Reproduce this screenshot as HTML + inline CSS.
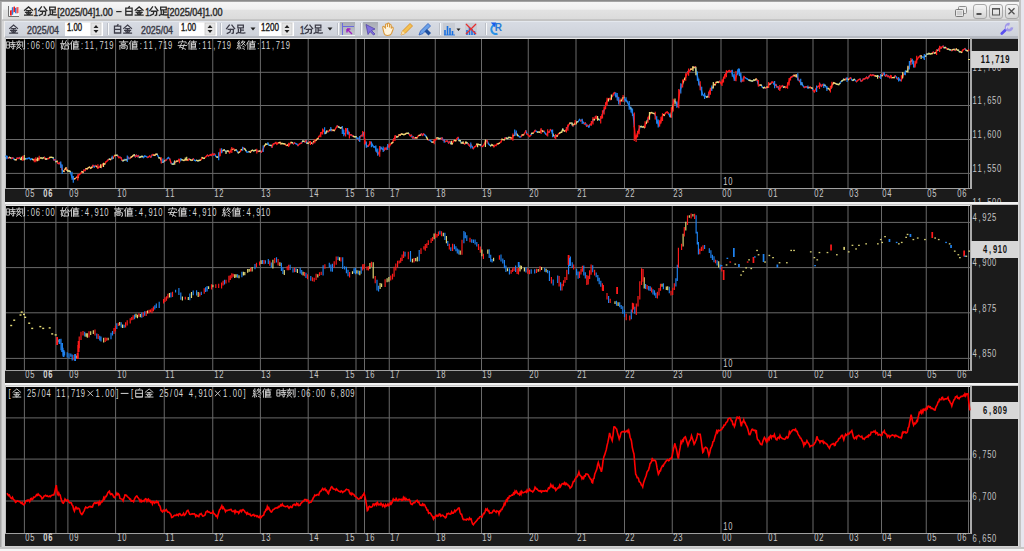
<!DOCTYPE html><html><head><meta charset="utf-8"><title>chart</title><style>html,body{margin:0;padding:0;background:#d4d4d4;overflow:hidden}svg{display:block}text{font-family:"Liberation Sans",sans-serif;font-size:10px;white-space:pre}.ui{font-family:"Liberation Sans",sans-serif}</style></head><body>
<svg width="1024" height="551" viewBox="0 0 1024 551">
<g>
<defs><linearGradient id="tb" x1="0" y1="0" x2="0" y2="1"><stop offset="0" stop-color="#f6f6f6"/><stop offset="0.4" stop-color="#f0f0f0"/><stop offset="0.46" stop-color="#e2e2e2"/><stop offset="1" stop-color="#dadada"/></linearGradient><linearGradient id="btn" x1="0" y1="0" x2="0" y2="1"><stop offset="0" stop-color="#f6f6f6"/><stop offset="0.5" stop-color="#e6e6e6"/><stop offset="1" stop-color="#d2d2d2"/></linearGradient><linearGradient id="tool" x1="0" y1="0" x2="0" y2="1"><stop offset="0" stop-color="#d8dce4"/><stop offset="1" stop-color="#ced2da"/></linearGradient><linearGradient id="press" x1="0" y1="0" x2="0" y2="1"><stop offset="0" stop-color="#a8acb4"/><stop offset="1" stop-color="#c4c8d0"/></linearGradient></defs>
<rect x="0" y="0" width="1024" height="551" fill="#d6d6d6" />
<rect x="0" y="0" width="1" height="551" fill="#a4a4a4" />
<rect x="1" y="0" width="1" height="551" fill="#bcbcbc" />
<rect x="0" y="0" width="1024" height="1" fill="#8a8a8a" />
<rect x="0" y="1" width="1024" height="1" fill="#a4a4a4" />
<rect x="1021" y="0" width="3" height="551" fill="#e6e6ee" />
<rect x="1019" y="0" width="2" height="551" fill="#c4c4c4" />
<rect x="1018" y="38" width="1" height="508" fill="#dadada" />
<rect x="0" y="549" width="1024" height="2" fill="#f6f6f6" />
<rect x="0" y="547" width="1024" height="2" fill="#c6c6c6" />
<rect x="5" y="546" width="1014" height="1" fill="#d2d2d2" />
<rect x="2" y="2" width="1017" height="18" fill="url(#tb)" />
<rect x="2" y="2" width="1" height="18" fill="#f8f8f8" />
<rect x="9" y="6" width="10" height="10" fill="#f4f6f6"/>
<path d="M8.5,6V16.5H19" stroke="#707070" stroke-width="1" fill="none"/>
<path d="M10,10.5L11.8,10V15.5H10Z" fill="#f01818"/><path d="M11.8,7.5L13.2,7V14.5L11.8,15Z" fill="#2a7ee0"/><path d="M13.4,6.8L15,6.4V12L13.4,12.4Z" fill="#f01818"/><path d="M15,8L16.5,7.6V13.2L15,13.2Z" fill="#2a7ee0"/><path d="M16.5,7.2L18.5,7V13L16.5,13.4Z" fill="#f45858"/>
<path transform="translate(23.90,6.40) scale(0.930)" d="M0.8,4.2L5,0.6L9.2,4.2M3,4.6H7M1.8,6.4H8.2M5,4.6V9.4M3,7.2L3.8,8.6M7,7.2L6.2,8.6M0.8,9.4H9.2" fill="none" stroke="#2a2a2a" stroke-width="1.40" stroke-linecap="square"/>
<text class="ui" x="33.60" y="15.8" font-size="12" fill="#2a2a2a" stroke="#2a2a2a" stroke-width="0.4" font-weight="normal" textLength="4.60" lengthAdjust="spacingAndGlyphs" style="font-family:'Liberation Sans',sans-serif">1</text>
<path transform="translate(38.10,6.40) scale(0.930)" d="M3.6,0.6L0.6,4.6M6.4,0.6L9.4,4.6M2.4,5.2H8V9.2L6.6,9.6M5,5.2L4.4,8.2L1.4,9.6" fill="none" stroke="#2a2a2a" stroke-width="1.40" stroke-linecap="square"/>
<path transform="translate(47.80,6.40) scale(0.930)" d="M2,0.8H8V3.8H2ZM5,3.8V8.6M5,6.2H8M2.6,5.2V8.8M0.6,9.6L2.6,8.6Q5,9.4 9.6,9.2" fill="none" stroke="#2a2a2a" stroke-width="1.40" stroke-linecap="square"/>
<text class="ui" x="57.30" y="15.8" font-size="12" fill="#2a2a2a" stroke="#2a2a2a" stroke-width="0.4" font-weight="normal" textLength="55.60" lengthAdjust="spacingAndGlyphs" style="font-family:'Liberation Sans',sans-serif">[2025/04]1.00</text>
<rect x="116.2" y="11" width="5.4" height="1.2" fill="#2a2a2a"/>
<path transform="translate(124.30,6.40) scale(0.930)" d="M5.4,0.2L4.4,1.6M1.6,1.8H8.4V9.4H1.6ZM1.6,5.4H8.4M1.6,9.2H8.4" fill="none" stroke="#2a2a2a" stroke-width="1.40" stroke-linecap="square"/>
<path transform="translate(134.50,6.40) scale(0.930)" d="M0.8,4.2L5,0.6L9.2,4.2M3,4.6H7M1.8,6.4H8.2M5,4.6V9.4M3,7.2L3.8,8.6M7,7.2L6.2,8.6M0.8,9.4H9.2" fill="none" stroke="#2a2a2a" stroke-width="1.40" stroke-linecap="square"/>
<text class="ui" x="145.20" y="15.8" font-size="12" fill="#2a2a2a" stroke="#2a2a2a" stroke-width="0.4" font-weight="normal" textLength="4.60" lengthAdjust="spacingAndGlyphs" style="font-family:'Liberation Sans',sans-serif">1</text>
<path transform="translate(149.20,6.40) scale(0.930)" d="M3.6,0.6L0.6,4.6M6.4,0.6L9.4,4.6M2.4,5.2H8V9.2L6.6,9.6M5,5.2L4.4,8.2L1.4,9.6" fill="none" stroke="#2a2a2a" stroke-width="1.40" stroke-linecap="square"/>
<path transform="translate(158.80,6.40) scale(0.930)" d="M2,0.8H8V3.8H2ZM5,3.8V8.6M5,6.2H8M2.6,5.2V8.8M0.6,9.6L2.6,8.6Q5,9.4 9.6,9.2" fill="none" stroke="#2a2a2a" stroke-width="1.40" stroke-linecap="square"/>
<text class="ui" x="167.00" y="15.8" font-size="12" fill="#2a2a2a" stroke="#2a2a2a" stroke-width="0.4" font-weight="normal" textLength="55.60" lengthAdjust="spacingAndGlyphs" style="font-family:'Liberation Sans',sans-serif">[2025/04]1.00</text>
<rect x="958.5" y="6.5" width="8" height="7" rx="1" fill="#ececec" stroke="#8c8c8c" stroke-width="1"/><rect x="955.5" y="9.5" width="8" height="7" rx="1" fill="#e6e6e6" stroke="#7a7a7a" stroke-width="1"/><rect x="957" y="11" width="5" height="4" fill="#cfcfcf"/>
<rect x="973.5" y="4.5" width="13" height="14" rx="2.5" fill="url(#btn)" stroke="#a8a8a8"/>
<rect x="989.5" y="4.5" width="13" height="14" rx="2.5" fill="url(#btn)" stroke="#a8a8a8"/>
<rect x="1005.5" y="4.5" width="13" height="14" rx="2.5" fill="url(#btn)" stroke="#a8a8a8"/>
<rect x="976.5" y="13" width="5" height="2" fill="#505050"/>
<rect x="992.5" y="8.5" width="7" height="6.5" fill="none" stroke="#555555" stroke-width="1"/><rect x="992" y="8" width="8" height="1.6" fill="#555555"/>
<path d="M1008.5,8.2L1014.5,14.2M1014.5,8.2L1008.5,14.2" stroke="#505050" stroke-width="1.3"/>
<rect x="2" y="19.5" width="1017" height="1" fill="#b0b0b0"/><rect x="4" y="21" width="1" height="16" fill="#eeeeee"/>
<rect x="5" y="21" width="1013" height="15" fill="url(#tool)"/>
<rect x="5" y="21" width="1013" height="1" fill="#e4e8ee"/>
<rect x="5" y="36" width="1013" height="2" fill="#b6bac2"/>
<path transform="translate(9.00,24.50) scale(0.920)" d="M0.8,4.2L5,0.6L9.2,4.2M3,4.6H7M1.8,6.4H8.2M5,4.6V9.4M3,7.2L3.8,8.6M7,7.2L6.2,8.6M0.8,9.4H9.2" fill="none" stroke="#3c3c48" stroke-width="1.36" stroke-linecap="square"/>
<text class="ui" x="27.00" y="33.5" font-size="11.5" fill="#3c3c48" stroke="#3c3c48" stroke-width="0.4" font-weight="normal" textLength="32.00" lengthAdjust="spacingAndGlyphs" style="font-family:'Liberation Sans',sans-serif">2025/04</text>
<rect x="65" y="22" width="38" height="14" fill="#ffffff"/><rect x="65" y="22" width="38" height="1" fill="#f0f0f0"/><text class="ui" x="67.00" y="31.2" font-size="11.5" fill="#202020" stroke="#202020" stroke-width="0.4" font-weight="normal" textLength="15.00" lengthAdjust="spacingAndGlyphs" style="font-family:'Liberation Sans',sans-serif">1.00</text><rect x="91" y="23" width="10" height="12" fill="#e4e4e4" stroke="#c8c8c8" stroke-width="0.8"/><path d="M93.5,28 L96,25 L98.5,28Z M93.5,30 L96,33 L98.5,30Z" fill="#202020"/>
<rect x="107" y="23" width="1" height="12" fill="#bcc0c8"/><rect x="108" y="23" width="1" height="12" fill="#f8f9fa"/>
<path transform="translate(113.00,24.50) scale(0.920)" d="M5.4,0.2L4.4,1.6M1.6,1.8H8.4V9.4H1.6ZM1.6,5.4H8.4M1.6,9.2H8.4" fill="none" stroke="#3c3c48" stroke-width="1.36" stroke-linecap="square"/>
<path transform="translate(123.00,24.50) scale(0.920)" d="M0.8,4.2L5,0.6L9.2,4.2M3,4.6H7M1.8,6.4H8.2M5,4.6V9.4M3,7.2L3.8,8.6M7,7.2L6.2,8.6M0.8,9.4H9.2" fill="none" stroke="#3c3c48" stroke-width="1.36" stroke-linecap="square"/>
<text class="ui" x="141.00" y="33.5" font-size="11.5" fill="#3c3c48" stroke="#3c3c48" stroke-width="0.4" font-weight="normal" textLength="32.00" lengthAdjust="spacingAndGlyphs" style="font-family:'Liberation Sans',sans-serif">2025/04</text>
<rect x="179" y="22" width="38" height="14" fill="#ffffff"/><rect x="179" y="22" width="38" height="1" fill="#f0f0f0"/><text class="ui" x="181.00" y="31.2" font-size="11.5" fill="#202020" stroke="#202020" stroke-width="0.4" font-weight="normal" textLength="15.00" lengthAdjust="spacingAndGlyphs" style="font-family:'Liberation Sans',sans-serif">1.00</text><rect x="205" y="23" width="10" height="12" fill="#e4e4e4" stroke="#c8c8c8" stroke-width="0.8"/><path d="M207.5,28 L210,25 L212.5,28Z M207.5,30 L210,33 L212.5,30Z" fill="#202020"/>
<rect x="220" y="23" width="1" height="12" fill="#bcc0c8"/><rect x="221" y="23" width="1" height="12" fill="#f8f9fa"/>
<path transform="translate(226.00,24.50) scale(0.920)" d="M3.6,0.6L0.6,4.6M6.4,0.6L9.4,4.6M2.4,5.2H8V9.2L6.6,9.6M5,5.2L4.4,8.2L1.4,9.6" fill="none" stroke="#3c3c48" stroke-width="1.36" stroke-linecap="square"/>
<path transform="translate(236.00,24.50) scale(0.920)" d="M2,0.8H8V3.8H2ZM5,3.8V8.6M5,6.2H8M2.6,5.2V8.8M0.6,9.6L2.6,8.6Q5,9.4 9.6,9.2" fill="none" stroke="#3c3c48" stroke-width="1.36" stroke-linecap="square"/>
<path d="M250.5,27.5H255.5L253,30.5Z" fill="#202020"/>
<rect x="259" y="22" width="35" height="14" fill="#ffffff"/><rect x="259" y="22" width="35" height="1" fill="#f0f0f0"/><text class="ui" x="261.00" y="31.2" font-size="11.5" fill="#202020" stroke="#202020" stroke-width="0.4" font-weight="normal" textLength="18.00" lengthAdjust="spacingAndGlyphs" style="font-family:'Liberation Sans',sans-serif">1200</text><rect x="282" y="23" width="10" height="12" fill="#e4e4e4" stroke="#c8c8c8" stroke-width="0.8"/><path d="M284.5,28 L287,25 L289.5,28Z M284.5,30 L287,33 L289.5,30Z" fill="#202020"/>
<text class="ui" x="300.00" y="33.5" font-size="11.5" fill="#3c3c48" stroke="#3c3c48" stroke-width="0.4" font-weight="normal" textLength="4.50" lengthAdjust="spacingAndGlyphs" style="font-family:'Liberation Sans',sans-serif">1</text>
<path transform="translate(304.00,24.50) scale(0.920)" d="M3.6,0.6L0.6,4.6M6.4,0.6L9.4,4.6M2.4,5.2H8V9.2L6.6,9.6M5,5.2L4.4,8.2L1.4,9.6" fill="none" stroke="#3c3c48" stroke-width="1.36" stroke-linecap="square"/>
<path transform="translate(313.50,24.50) scale(0.920)" d="M2,0.8H8V3.8H2ZM5,3.8V8.6M5,6.2H8M2.6,5.2V8.8M0.6,9.6L2.6,8.6Q5,9.4 9.6,9.2" fill="none" stroke="#3c3c48" stroke-width="1.36" stroke-linecap="square"/>
<path d="M327.5,27.5H332.5L330,30.5Z" fill="#202020"/>
<rect x="337" y="23" width="1" height="12" fill="#bcc0c8"/><rect x="338" y="23" width="1" height="12" fill="#f8f9fa"/>
<rect x="340" y="22" width="15" height="14" fill="url(#press)"/><rect x="340" y="35" width="15" height="1" fill="#f0f2f4"/>
<path d="M342.5,23V35M342,26.5H354" stroke="#6a6adc" stroke-width="1"/><path d="M347,29L352,34M347,29V32.5M347,29H350.5" stroke="#a020c0" stroke-width="1.4" fill="none"/>
<rect x="360" y="23" width="1" height="12" fill="#bcc0c8"/><rect x="361" y="23" width="1" height="12" fill="#f8f9fa"/>
<rect x="363" y="22" width="15" height="14" fill="url(#press)"/>
<path d="M366,24.5L375,29L371.5,30.5L375,34L373.5,35L370,31.5L368,34.5Z" fill="#8070e0" stroke="#4a3aa0" stroke-width="0.7"/>
<path d="M383,29Q382,26 384,26.5L385.5,28V24.5Q386.5,23 387.5,24.5V27V23.5Q388.7,22.5 389.5,24V27.5V24.5Q390.8,23.8 391.2,25.5V28.5L392,27Q393.8,27 393,29.5L391.5,33.5Q390.5,35.5 387.5,35.5Q384.5,35.5 384,33Z" fill="#fff4dc" stroke="#d89a40" stroke-width="1.1"/>
<path d="M401,35L402.5,31L410,23.5L412.5,26L405,33.5Z" fill="#f4c050" stroke="#d8902a" stroke-width="0.9"/><path d="M401,35L402.5,31L405,33.5Z" fill="#f8e0b0"/>
<path d="M419,35L420.5,31L428,23.5L430.5,26L423,33.5Z" fill="#6aa0e8" stroke="#3a68c0" stroke-width="0.9"/><path d="M424.5,31.5L428.5,35.5L431,33L427,29Z" fill="#2050a0"/>
<rect x="439" y="23" width="1" height="12" fill="#bcc0c8"/><rect x="440" y="23" width="1" height="12" fill="#f8f9fa"/>
<rect x="443" y="23" width="12" height="12" fill="#c8ccd4"/>
<path d="M445,35V30M447.5,35V26M450,35V28M452.5,35V31" stroke="#1a70e0" stroke-width="1.6"/><path d="M444,35H455" stroke="#1a70e0" stroke-width="0.8"/>
<path d="M456.5,28.5H460.5L458.5,31Z" fill="#202020"/>
<rect x="465" y="23" width="12" height="12" fill="#c8ccd4"/>
<path d="M467,35V30M469.5,35V27M472,35V29M474.5,35V31" stroke="#1a70e0" stroke-width="1.6"/><path d="M466,24L476,34M476,24L466,34" stroke="#e83030" stroke-width="1.3"/>
<rect x="485" y="23" width="1" height="12" fill="#bcc0c8"/><rect x="486" y="23" width="1" height="12" fill="#f8f9fa"/>
<path d="M494.5,25 A4.6,4.6 0 1 0 497.5,33.8" fill="none" stroke="#2a92e6" stroke-width="2.1"/>
<path d="M490.8,22.6H496.2L495.2,27.6Z" fill="#1a5af0"/>
<text x="494.8" y="31.4" font-size="6.8" font-weight="bold" fill="#2a7ad8" style="font-family:'Liberation Sans',sans-serif">R</text>
<path d="M1001.8,33.6L1006,29.4" stroke="#5a50f0" stroke-width="2.8" stroke-linecap="round"/>
<path d="M1009.6,24.2 A3,3 0 1 0 1012,27.4" fill="none" stroke="#a098e8" stroke-width="2.6"/>
<path d="M1006.4,28.6L1007.2,25.6" stroke="#f0eeff" stroke-width="1"/>
<rect x="5" y="38" width="1013" height="508" fill="#1b1b1b"/>
<rect x="5" y="202" width="1013" height="2" fill="#f2f2f2"/><rect x="5" y="204" width="1013" height="1" fill="#c8c8c8"/>
<rect x="5" y="383" width="1013" height="2" fill="#f2f2f2"/><rect x="5" y="385" width="1013" height="1" fill="#c8c8c8"/>
<rect x="971" y="38" width="47" height="1" fill="#a8acb4"/>
<rect x="6" y="39" width="964" height="149" fill="#000"/>
<rect x="5" y="38" width="966" height="1" fill="#e8e8e8"/>
<rect x="5" y="38" width="1" height="150" fill="#c0c0c0"/>
<rect x="970" y="38" width="2" height="151" fill="#ababab"/>
<rect x="5" y="188" width="966" height="1" fill="#a0a0a0"/>
<rect x="6" y="206" width="964" height="164" fill="#000"/>
<rect x="5" y="205" width="966" height="1" fill="#e8e8e8"/>
<rect x="5" y="205" width="1" height="165" fill="#c0c0c0"/>
<rect x="970" y="205" width="2" height="166" fill="#ababab"/>
<rect x="5" y="370" width="966" height="1" fill="#a0a0a0"/>
<rect x="6" y="387" width="964" height="146" fill="#000"/>
<rect x="5" y="386" width="966" height="1" fill="#e8e8e8"/>
<rect x="5" y="386" width="1" height="147" fill="#c0c0c0"/>
<rect x="970" y="386" width="2" height="148" fill="#ababab"/>
<rect x="5" y="533" width="966" height="1" fill="#a0a0a0"/>
<path d="M24.4,39V188M55.9,39V188M67.9,39V188M115.6,39V188M164.25,39V188M212.75,39V188M260.4,39V188M308.2,39V188M356,39V188M364.5,39V188M389.25,39V188M435.25,39V188M481.5,39V188M528.25,39V188M576,39V188M624.5,39V188M672.25,39V188M721,39V188M767,39V188M813,39V188M848,39V188M881.5,39V188M926.25,39V188M968.5,39V188" stroke="#6a6a6a" stroke-width="1"/>
<path d="M6,72.3H970M6,105.5H970M6,139.5H970M6,173.4H970" stroke="#6a6a6a" stroke-width="1"/>
<path d="M24.4,206V370M55.9,206V370M67.9,206V370M115.6,206V370M164.25,206V370M212.75,206V370M260.4,206V370M308.2,206V370M356,206V370M364.5,206V370M389.25,206V370M435.25,206V370M481.5,206V370M528.25,206V370M576,206V370M624.5,206V370M672.25,206V370M721,206V370M767,206V370M813,206V370M848,206V370M881.5,206V370M926.25,206V370M968.5,206V370" stroke="#6a6a6a" stroke-width="1"/>
<path d="M6,222.4H970M6,267.6H970M6,312.8H970M6,358.4H970" stroke="#6a6a6a" stroke-width="1"/>
<path d="M24.4,387V533M55.9,387V533M67.9,387V533M115.6,387V533M164.25,387V533M212.75,387V533M260.4,387V533M308.2,387V533M356,387V533M364.5,387V533M389.25,387V533M435.25,387V533M481.5,387V533M528.25,387V533M576,387V533M624.5,387V533M672.25,387V533M721,387V533M767,387V533M813,387V533M848,387V533M881.5,387V533M926.25,387V533M968.5,387V533" stroke="#6a6a6a" stroke-width="1"/>
<path d="M6,417.9H970M6,459.1H970M6,501.0H970" stroke="#6a6a6a" stroke-width="1"/>
<path d="M6.0,156.3L7.1,156.9M7.1,156.9L8.2,158.1M10.5,157.9L11.6,158.4M12.8,157.9L13.9,159.0M13.9,159.0L15.0,159.6M17.2,158.1L18.3,158.4M19.4,157.8L20.6,159.2M22.8,157.2L23.9,159.1M25.0,158.9L26.1,158.6M26.1,158.6L27.2,158.8M27.2,158.8L28.3,158.1M28.3,158.1L29.4,158.1M29.4,158.1L30.6,159.6M30.6,159.6L31.7,158.9M31.7,158.9L32.8,159.5M43.3,157.8L44.4,157.4M46.5,159.0L47.6,158.6M53.0,157.7L54.0,159.9M55.0,159.9L56.0,161.6M58.0,163.3L59.0,163.7M60.0,162.6L61.0,165.5M62.0,169.5L63.0,170.9M68.0,171.2L69.0,171.0M70.0,171.5L71.0,173.9M71.0,173.9L72.0,177.1M72.0,177.1L73.0,178.4M84.0,170.1L85.0,170.5M93.0,165.5L94.2,167.0M94.2,167.0L95.3,165.7M97.7,167.6L98.8,167.4M100.0,166.4L101.2,167.4M108.2,159.8L109.4,159.2M117.0,155.2L118.0,156.3M120.0,157.2L121.0,157.9M122.0,160.2L123.0,160.8M124.0,160.2L125.0,159.4M125.0,159.4L126.0,159.9M128.0,157.3L129.0,158.7M129.0,158.7L130.1,158.2M134.3,155.0L135.3,156.7M136.3,155.3L137.4,156.6M138.4,155.8L139.4,157.3M140.4,157.0L141.5,156.5M142.5,156.5L143.5,157.6M143.5,157.6L144.6,156.0M144.6,156.0L145.6,156.3M145.6,156.3L146.7,156.9M146.7,156.9L147.7,157.4M150.8,157.1L151.9,155.3M157.0,154.3L158.0,156.0M158.0,156.0L159.0,157.8M161.1,159.9L162.1,162.4M164.3,160.9L165.3,160.5M166.4,159.8L167.5,158.3M167.5,158.3L168.6,157.6M168.6,157.6L169.8,159.2M171.1,162.9L172.3,164.1M173.4,164.1L174.5,161.4M174.5,161.4L175.6,162.1M178.8,159.6L179.8,161.0M179.8,161.0L180.9,158.9M180.9,158.9L181.9,159.8M189.1,159.0L190.2,159.7M193.3,159.1L194.4,160.2M194.4,160.2L195.6,160.7M195.6,160.7L196.7,160.4M197.9,160.8L199.0,160.5M207.4,155.3L208.5,155.8M210.5,154.8L211.5,155.4M212.6,153.6L213.6,154.9M214.7,154.2L215.8,156.3M215.8,156.3L216.9,157.0M220.9,150.9L222.0,151.7M224.2,150.0L225.2,150.9M225.2,150.9L226.3,151.9M226.3,151.9L227.4,151.0M236.0,149.9L237.1,151.1M237.1,151.1L238.3,152.7M243.4,148.1L244.6,148.7M245.8,150.4L247.0,152.1M247.0,152.1L248.1,152.1M248.1,152.1L249.2,151.7M252.6,150.3L253.8,150.8M256.0,150.2L257.0,150.8M257.0,150.8L258.0,151.4M260.0,151.0L261.0,152.2M266.9,144.3L267.9,143.1M267.9,143.1L268.9,145.1M268.9,145.1L270.0,145.4M271.0,145.4L272.0,147.0M273.9,143.7L274.9,143.4M292.3,142.7L293.4,143.7M294.6,143.0L295.7,143.6M295.7,143.6L296.9,144.2M296.9,144.2L298.0,145.4M301.5,142.9L302.7,141.2M303.9,141.2L305.0,142.0M306.0,140.8L307.1,143.2M309.3,142.0L310.4,142.7M311.5,143.1L312.6,143.7M323.5,130.5L324.6,131.6M324.6,131.6L325.7,133.2M326.8,131.1L327.9,131.7M331.0,129.6L332.0,130.6M337.3,126.0L338.4,126.9M339.5,127.4L340.5,128.0M342.6,129.0L343.5,133.1M343.5,133.1L344.5,133.8M344.5,133.8L345.6,133.0M347.9,131.4L349.1,134.3M349.1,134.3L350.3,134.8M351.4,135.0L352.6,135.9M356.0,136.7L357.0,138.2M357.0,138.2L358.0,138.2M358.0,138.2L359.0,140.2M361.2,135.7L362.3,134.9M362.3,134.9L363.4,132.9M363.4,132.9L364.5,138.6M365.6,143.1L367.0,146.5M367.0,146.5L368.2,146.0M370.7,142.4L371.8,143.6M371.8,143.6L372.9,145.8M372.9,145.8L373.9,147.0M373.9,147.0L375.0,146.6M375.0,146.6L376.2,150.1M376.2,150.1L377.4,152.6M379.7,151.0L380.8,147.2M380.8,147.2L381.9,148.7M381.9,148.7L382.9,149.3M382.9,149.3L384.0,150.2M386.2,149.2L387.3,147.3M388.4,146.2L389.5,146.0M393.7,139.2L394.6,138.3M395.6,136.1L396.8,137.0M408.3,133.2L409.4,134.4M411.4,135.3L412.5,137.8M413.5,137.1L414.5,138.5M421.4,133.9L422.5,135.3M423.5,134.0L424.6,134.8M424.6,134.8L425.6,135.7M425.6,135.7L426.5,137.1M428.7,139.8L429.8,140.4M429.8,140.4L431.0,141.2M431.0,141.2L432.1,142.1M438.0,137.9L439.0,138.8M440.0,138.4L441.0,139.1M442.0,137.9L443.1,139.8M444.2,140.6L445.3,141.6M447.6,141.3L448.7,142.9M449.9,141.6L451.0,143.6M458.0,137.6L459.1,140.5M460.2,140.8L461.3,142.9M463.6,143.3L464.7,143.9M467.0,142.8L468.2,143.9M469.2,145.3L470.2,146.3M471.3,145.3L472.3,147.0M472.3,147.0L473.3,148.5M480.4,144.8L481.5,146.2M486.3,140.7L487.4,141.6M487.4,141.6L488.5,143.8M488.5,143.8L489.6,145.0M489.6,145.0L490.7,145.7M505.3,137.9L506.5,138.2M507.6,138.5L508.8,137.5M517.8,135.5L518.9,136.3M518.9,136.3L520.0,137.1M520.0,137.1L521.2,136.4M525.8,131.0L527.0,133.9M530.6,135.4L531.7,133.4M535.2,130.5L536.4,131.4M536.4,131.4L537.7,132.1M540.8,130.3L541.8,130.5M543.8,131.2L544.8,132.6M544.8,132.6L545.8,134.0M545.8,134.0L546.8,134.7M548.0,132.1L549.3,132.0M550.5,129.7L551.6,130.9M551.6,130.9L552.6,133.7M553.7,135.5L554.8,137.4M562.8,129.1L563.8,130.6M566.8,128.8L567.9,126.2M571.0,123.1L572.0,124.0M572.0,124.0L573.0,125.9M577.1,121.7L578.3,121.5M578.3,121.5L579.5,119.5M579.5,119.5L580.7,120.8M581.9,120.2L583.1,122.3M583.1,122.3L584.3,123.7M585.4,123.1L586.6,126.1M587.7,125.4L588.9,127.1M588.9,127.1L590.0,124.8M592.2,122.3L593.3,119.4M595.5,116.8L596.6,118.0M598.7,119.4L599.8,120.1M599.8,120.1L601.0,118.0M602.2,114.9L603.4,111.4M603.4,111.4L604.5,109.5M608.8,98.8L609.7,98.6M611.7,96.7L612.6,95.8M614.6,92.7L615.5,95.5M615.5,95.5L616.5,96.2M618.4,100.5L619.4,101.6M623.8,97.5L624.9,99.6M624.9,99.6L626.0,100.4M626.0,100.4L627.0,101.2M627.0,101.2L628.1,103.6M628.1,103.6L629.2,105.7M629.2,105.7L630.3,107.8M631.3,109.2L632.2,112.7M632.2,112.7L633.2,114.7M633.2,114.7L634.3,126.5M639.1,129.9L640.0,126.8M641.1,126.4L642.2,127.1M647.3,120.7L648.4,118.2M654.5,113.6L655.6,116.3M655.6,116.3L656.7,120.1M656.7,120.1L657.8,122.7M657.8,122.7L658.9,125.7M668.3,113.3L669.4,115.0M669.4,115.0L670.5,116.6M674.1,100.9L675.3,101.6M675.3,101.6L676.5,103.3M676.5,103.3L677.7,106.3M679.9,90.9L681.1,87.4M687.5,72.3L688.6,71.0M695.2,66.9L696.2,71.9M696.2,71.9L697.1,74.8M697.1,74.8L698.1,79.3M698.1,79.3L699.2,83.7M699.2,83.7L700.2,85.9M700.2,85.9L701.3,90.0M701.3,90.0L702.4,94.0M702.4,94.0L703.5,95.5M703.5,95.5L704.6,95.5M704.6,95.5L705.7,96.5M705.7,96.5L706.8,97.0M707.9,96.6L709.0,92.6M718.4,82.3L719.4,81.5M725.9,73.8L727.1,72.3M731.4,71.2L732.6,74.6M732.6,74.6L733.9,77.3M733.9,77.3L735.1,79.9M736.3,75.7L737.5,73.4M737.5,73.4L738.7,69.2M738.7,69.2L739.7,72.8M739.7,72.8L740.6,76.6M740.6,76.6L741.6,81.5M742.6,80.4L743.5,78.0M744.5,77.3L745.7,78.0M745.7,78.0L746.8,78.7M746.8,78.7L748.0,79.5M748.0,79.5L749.1,80.2M750.3,80.5L751.5,80.9M752.6,81.0L753.8,80.0M757.1,80.2L758.0,83.4M758.0,83.4L759.0,85.6M761.2,85.2L762.3,87.0M762.3,87.0L763.4,87.8M764.5,87.5L765.7,88.1M769.9,84.1L770.9,83.4M772.8,82.3L773.8,84.0M773.8,84.0L774.8,85.4M775.8,84.6L776.9,86.9M777.9,86.8L778.9,89.1M782.5,85.8L783.6,87.2M792.0,76.7L793.0,76.2M796.0,75.1L797.0,76.3M798.5,79.6L799.7,81.4M802.0,84.3L803.1,85.8M803.1,85.8L804.3,87.4M805.5,86.9L806.6,86.8M812.2,88.2L813.3,90.4M820.2,84.5L821.4,86.3M822.5,84.6L823.7,85.4M824.8,85.3L826.0,86.7M826.0,86.7L827.2,88.5M836.7,84.1L837.7,84.4M839.8,83.6L840.8,81.9M840.8,81.9L841.8,81.0M842.8,80.4L843.9,79.3M846.1,78.6L847.2,79.0M850.7,78.0L851.9,79.8M851.9,79.8L853.0,80.3M854.2,79.4L855.3,80.3M855.3,80.3L856.5,81.6M860.0,79.2L861.1,81.0M863.3,79.1L864.4,78.9M866.5,77.3L867.5,78.4M868.6,77.2L869.6,75.7M872.9,74.9L874.0,75.5M877.5,75.8L878.6,76.4M878.6,76.4L879.8,77.3M883.4,73.4L884.4,74.4M884.4,74.4L885.4,75.9M886.5,75.0L887.5,76.4M888.5,76.2L889.6,77.6M895.2,75.9L896.3,77.1M896.3,77.1L897.4,78.8M898.5,78.2L899.6,79.8M899.6,79.8L900.7,80.5M900.7,80.5L902.0,78.4M903.4,74.3L904.7,73.8M904.7,73.8L905.9,71.5M907.2,71.4L908.3,67.9M909.4,66.3L910.5,61.7M913.0,62.6L914.3,66.6M920.3,55.8L921.4,56.4M921.4,56.4L922.4,57.0M922.4,57.0L923.5,57.7M923.5,57.7L924.6,56.2M925.7,56.1L926.8,54.1M927.9,54.1L928.9,53.5M933.3,52.2L934.4,53.1M937.7,50.3L938.8,49.0M939.9,47.1L940.9,48.3M943.1,46.2L944.2,47.7M945.3,47.5L946.4,48.3M948.5,49.1L949.6,49.7M950.7,49.9L951.8,50.5M954.0,49.4L955.1,50.3M958.4,50.3L959.4,51.7M964.9,48.7L966.2,50.4" stroke="#1e82f0" stroke-width="1.4" fill="none" stroke-linecap="square"/>
<path d="M8.2,158.1L9.4,157.4M11.6,158.4L12.8,157.9M16.1,159.8L17.2,158.1M18.3,158.4L19.4,157.8M21.7,158.8L22.8,157.2M36.0,160.1L37.0,159.5M38.0,159.8L39.0,158.5M44.4,157.4L45.5,159.0M47.6,158.6L48.7,158.4M48.7,158.4L49.8,157.5M54.0,159.9L55.0,159.9M57.0,161.3L58.0,163.3M59.0,163.7L60.0,162.6M61.0,165.5L62.0,169.5M64.0,171.3L65.0,169.3M66.0,167.9L67.0,170.0M73.0,178.4L74.0,178.9M75.0,178.6L76.0,177.8M76.0,177.8L77.0,177.2M78.0,177.4L79.0,174.6M79.0,174.6L80.0,174.0M80.0,174.0L81.0,173.0M81.0,173.0L82.0,171.7M83.0,172.2L84.0,170.1M85.0,170.5L86.1,168.7M87.3,168.8L88.4,167.7M89.6,167.2L90.7,168.2M91.9,167.2L93.0,165.5M95.3,165.7L96.5,166.4M98.8,167.4L100.0,166.4M101.2,167.4L102.3,164.7M102.3,164.7L103.5,163.9M104.7,164.0L105.8,162.1M105.8,162.1L107.0,161.1M107.0,161.1L108.2,159.8M110.6,159.5L111.8,158.1M113.0,158.1L114.0,156.4M114.0,156.4L115.0,155.4M118.0,156.3L119.0,157.8M119.0,157.8L120.0,157.2M121.0,157.9L122.0,160.2M127.0,159.7L128.0,157.3M130.1,158.2L131.1,157.2M132.2,156.5L133.2,155.5M135.3,156.7L136.3,155.3M137.4,156.6L138.4,155.8M147.7,157.4L148.8,156.8M148.8,156.8L149.8,155.9M149.8,155.9L150.8,157.1M151.9,155.3L152.9,154.7M152.9,154.7L153.9,155.1M154.9,155.3L156.0,154.2M165.3,160.5L166.4,159.8M169.8,159.2L171.1,162.9M175.6,162.1L176.6,161.2M177.7,161.1L178.8,159.6M185.0,159.9L186.0,159.7M187.0,159.9L188.1,160.2M188.1,160.2L189.1,159.0M192.3,160.1L193.3,159.1M200.1,160.3L201.1,159.6M201.1,159.6L202.2,157.7M204.3,158.2L205.3,157.3M205.3,157.3L206.4,156.2M206.4,156.2L207.4,155.3M208.5,155.8L209.5,155.3M209.5,155.3L210.5,154.8M211.5,155.4L212.6,153.6M213.6,154.9L214.7,154.2M218.0,157.3L219.0,155.9M219.0,155.9L219.9,153.0M219.9,153.0L220.9,150.9M222.0,151.7L223.1,150.4M228.5,151.1L229.6,152.9M229.6,152.9L230.6,151.2M230.6,151.2L231.5,149.5M232.5,149.4L233.7,148.8M233.7,148.8L234.8,150.3M239.3,152.2L240.3,151.4M240.3,151.4L241.4,149.6M242.4,149.4L243.4,148.1M250.4,152.2L251.5,150.6M258.0,151.4L259.0,151.2M261.0,152.2L262.2,151.0M262.2,151.0L263.4,148.2M263.4,148.2L264.5,145.8M272.0,147.0L273.0,144.4M273.0,144.4L273.9,143.7M274.9,143.4L275.9,142.5M275.9,142.5L276.9,144.2M276.9,144.2L278.0,142.9M278.0,142.9L279.0,142.7M280.0,142.5L281.0,143.8M285.0,144.2L286.0,145.2M286.0,145.2L287.0,145.4M288.0,145.0L289.1,144.9M289.1,144.9L290.1,143.5M290.1,143.5L291.2,142.4M293.4,143.7L294.6,143.0M298.0,145.4L299.2,144.2M299.2,144.2L300.4,143.5M300.4,143.5L301.5,142.9M305.0,142.0L306.0,140.8M308.2,143.3L309.3,142.0M312.6,143.7L313.7,141.5M315.9,140.4L317.0,139.2M318.0,138.5L318.9,136.5M318.9,136.5L319.9,135.9M319.9,135.9L321.1,133.0M321.1,133.0L322.3,132.2M322.3,132.2L323.5,130.5M327.9,131.7L328.9,131.0M328.9,131.0L330.0,130.1M332.0,130.6L333.0,130.1M334.1,130.5L335.1,129.5M335.1,129.5L336.2,127.5M336.2,127.5L337.3,126.0M341.6,127.6L342.6,129.0M345.6,133.0L346.7,129.1M346.7,129.1L347.9,131.4M350.3,134.8L351.4,135.0M352.6,135.9L353.7,136.5M359.0,140.2L360.1,136.8M360.1,136.8L361.2,135.7M364.5,138.6L365.6,143.1M368.2,146.0L369.5,144.1M369.5,144.1L370.7,142.4M377.4,152.6L378.6,153.8M378.6,153.8L379.7,151.0M384.0,150.2L385.1,148.1M385.1,148.1L386.2,149.2M387.3,147.3L388.4,146.2M389.5,146.0L390.5,144.4M390.5,144.4L391.6,143.2M392.7,142.5L393.7,139.2M394.6,138.3L395.6,136.1M397.9,136.6L399.1,134.9M400.2,135.0L401.4,134.0M405.0,134.3L406.1,133.5M409.4,134.4L410.4,136.1M410.4,136.1L411.4,135.3M412.5,137.8L413.5,137.1M414.5,138.5L415.7,137.7M416.8,137.9L418.0,136.2M418.0,136.2L419.1,135.4M420.3,135.1L421.4,133.9M422.5,135.3L423.5,134.0M427.5,139.3L428.7,139.8M433.3,142.1L434.5,140.4M434.5,140.4L435.8,139.7M435.8,139.7L437.0,138.0M441.0,139.1L442.0,137.9M443.1,139.8L444.2,140.6M445.3,141.6L446.4,141.0M446.4,141.0L447.6,141.3M448.7,142.9L449.9,141.6M452.2,143.7L453.4,141.1M453.4,141.1L454.5,140.5M455.7,140.7L456.8,138.8M456.8,138.8L458.0,137.6M462.4,142.7L463.6,143.3M464.7,143.9L465.9,142.4M468.2,143.9L469.2,145.3M470.2,146.3L471.3,145.3M473.3,148.5L474.5,146.9M474.5,146.9L475.7,146.4M475.7,146.4L476.9,144.3M481.5,146.2L482.7,146.4M482.7,146.4L483.9,144.9M483.9,144.9L485.1,142.3M485.1,142.3L486.3,140.7M492.9,145.4L493.9,146.9M493.9,146.9L495.0,145.3M495.0,145.3L496.0,145.4M496.0,145.4L497.0,144.0M497.0,144.0L498.0,143.8M499.1,143.3L500.1,142.6M500.1,142.6L501.1,141.8M501.1,141.8L502.0,139.3M504.2,139.7L505.3,137.9M510.9,137.8L512.0,139.0M512.0,139.0L513.2,135.7M514.4,135.3L515.6,132.9M515.6,132.9L516.7,133.9M521.2,136.4L522.3,135.0M523.5,134.9L524.6,133.3M524.6,133.3L525.8,131.0M527.0,133.9L528.2,135.0M528.2,135.0L529.4,136.5M529.4,136.5L530.6,135.4M532.9,133.3L534.0,132.1M534.0,132.1L535.2,130.5M539.9,132.2L540.8,130.3M542.8,131.5L543.8,131.2M546.8,134.7L548.0,132.1M549.3,132.0L550.5,129.7M554.8,137.4L556.0,135.9M557.2,136.0L558.4,134.0M558.4,134.0L559.5,133.2M564.7,131.1L565.7,130.3M565.7,130.3L566.8,128.8M567.9,126.2L568.9,124.7M568.9,124.7L570.0,123.2M573.0,125.9L574.0,124.4M580.7,120.8L581.9,120.2M584.3,123.7L585.4,123.1M586.6,126.1L587.7,125.4M590.0,124.8L591.1,123.8M591.1,123.8L592.2,122.3M594.4,119.7L595.5,116.8M596.6,118.0L597.6,119.0M601.0,118.0L602.2,114.9M604.5,109.5L605.6,105.7M605.6,105.7L606.7,102.1M606.7,102.1L607.8,99.7M607.8,99.7L608.8,98.8M609.7,98.6L610.7,99.5M610.7,99.5L611.7,96.7M612.6,95.8L613.6,93.5M613.6,93.5L614.6,92.7M616.5,96.2L617.5,96.5M617.5,96.5L618.4,100.5M619.4,101.6L620.5,100.7M634.3,126.5L635.4,138.5M635.4,138.5L636.4,137.1M636.4,137.1L637.3,133.8M637.3,133.8L638.3,132.1M638.3,132.1L639.1,129.9M644.4,127.5L645.4,124.6M645.4,124.6L646.3,123.2M648.4,118.2L649.5,115.1M649.5,115.1L650.5,112.9M658.9,125.7L660.0,123.2M660.0,123.2L661.0,121.0M661.0,121.0L662.1,117.2M662.1,117.2L663.2,114.7M664.2,115.2L665.1,113.8M665.1,113.8L666.1,112.5M666.1,112.5L667.2,112.0M667.2,112.0L668.3,113.3M672.9,105.3L674.1,100.9M677.7,106.3L678.8,98.4M678.8,98.4L679.9,90.9M681.1,87.4L682.3,84.8M683.5,81.3L684.5,79.2M685.4,77.6L686.4,75.4M686.4,75.4L687.5,72.3M688.6,71.0L689.7,71.0M689.7,71.0L690.8,69.2M691.9,69.1L693.0,67.5M694.1,67.6L695.2,66.9M709.0,92.6L710.0,90.5M710.0,90.5L711.1,89.3M712.1,87.7L713.0,86.7M713.0,86.7L714.0,84.4M715.1,84.7L716.2,82.4M719.4,81.5L720.3,82.5M720.3,82.5L721.3,83.9M721.3,83.9L722.5,81.5M722.5,81.5L723.6,78.3M723.6,78.3L724.8,75.7M724.8,75.7L725.9,73.8M727.1,72.3L728.2,71.3M728.2,71.3L729.2,70.6M729.2,70.6L730.3,71.7M730.3,71.7L731.4,71.2M735.1,79.9L736.3,75.7M741.6,81.5L742.6,80.4M743.5,78.0L744.5,77.3M756.1,79.1L757.1,80.2M759.0,85.6L760.1,85.0M765.7,88.1L766.9,87.1M768.0,87.1L769.0,84.2M770.9,83.4L771.9,82.1M771.9,82.1L772.8,82.3M774.8,85.4L775.8,84.6M776.9,86.9L777.9,86.8M778.9,89.1L780.1,88.2M780.1,88.2L781.3,86.6M781.3,86.6L782.5,85.8M784.7,86.8L785.8,87.6M785.8,87.6L786.9,87.0M786.9,87.0L787.9,83.9M787.9,83.9L788.8,82.4M788.8,82.4L789.8,78.9M789.8,78.9L790.9,77.6M790.9,77.6L792.0,76.7M793.0,76.2L794.1,75.3M795.1,76.0L796.0,75.1M797.0,76.3L798.5,79.6M799.7,81.4L800.8,82.8M804.3,87.4L805.5,86.9M806.6,86.8L807.8,87.3M808.9,87.7L810.1,87.0M810.1,87.0L811.2,87.9M813.3,90.4L814.4,91.9M814.4,91.9L815.6,89.4M815.6,89.4L816.7,87.7M816.7,87.7L817.9,86.7M817.9,86.7L819.0,86.0M819.0,86.0L820.2,84.5M821.4,86.3L822.5,84.6M829.7,89.8L830.7,88.3M831.6,86.1L832.6,84.4M833.6,82.8L834.6,83.2M844.9,79.8L846.1,78.6M848.4,79.5L849.5,78.6M849.5,78.6L850.7,78.0M856.5,81.6L857.7,80.4M857.7,80.4L858.8,79.7M858.8,79.7L860.0,79.2M861.1,81.0L862.3,80.6M862.3,80.6L863.3,79.1M864.4,78.9L865.4,78.4M865.4,78.4L866.5,77.3M867.5,78.4L868.6,77.2M869.6,75.7L870.7,74.8M870.7,74.8L871.8,75.5M871.8,75.5L872.9,74.9M874.0,75.5L875.2,75.8M879.8,77.3L881.0,75.7M882.2,75.6L883.4,73.4M885.4,75.9L886.5,75.0M887.5,76.4L888.5,76.2M889.6,77.6L890.7,75.8M890.7,75.8L891.9,77.6M894.1,77.5L895.2,75.9M897.4,78.8L898.5,78.2M902.0,78.4L903.4,74.3M908.3,67.9L909.4,66.3M911.6,60.6L913.0,62.6M914.3,66.6L915.4,63.8M915.4,63.8L916.4,60.3M916.4,60.3L917.5,59.0M917.5,59.0L918.4,57.4M918.4,57.4L919.4,56.8M919.4,56.8L920.3,55.8M932.2,53.5L933.3,52.2M935.5,52.8L936.6,50.7M938.8,49.0L939.9,47.1M940.9,48.3L942.0,47.0M942.0,47.0L943.1,46.2M946.4,48.3L947.5,49.1M951.8,50.5L952.9,49.6M955.1,50.3L956.2,49.1M961.6,52.3L962.7,50.1M962.7,50.1L963.8,49.5M963.8,49.5L964.9,48.7M967.4,50.8L968.7,50.0" stroke="#ff1a1a" stroke-width="1.4" fill="none" stroke-linecap="square"/>
<path d="M9.4,157.4L10.5,157.9M15.0,159.6L16.1,159.8M20.6,159.2L21.7,158.8M23.9,159.1L25.0,158.9M32.8,159.5L33.9,159.9M33.9,159.9L35.0,159.8M35.0,159.8L36.0,160.1M37.0,159.5L38.0,159.8M39.0,158.5L40.0,158.2M40.0,158.2L41.1,157.9M41.1,157.9L42.2,158.3M42.2,158.3L43.3,157.8M45.5,159.0L46.5,159.0M49.8,157.5L50.9,157.3M50.9,157.3L52.0,157.4M52.0,157.4L53.0,157.7M56.0,161.6L57.0,161.3M63.0,170.9L64.0,171.3M65.0,169.3L66.0,167.9M67.0,170.0L68.0,171.2M69.0,171.0L70.0,171.5M74.0,178.9L75.0,178.6M77.0,177.2L78.0,177.4M82.0,171.7L83.0,172.2M86.1,168.7L87.3,168.8M88.4,167.7L89.6,167.2M90.7,168.2L91.9,167.2M96.5,166.4L97.7,167.6M103.5,163.9L104.7,164.0M109.4,159.2L110.6,159.5M111.8,158.1L113.0,158.1M115.0,155.4L116.0,155.3M116.0,155.3L117.0,155.2M123.0,160.8L124.0,160.2M126.0,159.9L127.0,159.7M131.1,157.2L132.2,156.5M133.2,155.5L134.3,155.0M139.4,157.3L140.4,157.0M141.5,156.5L142.5,156.5M153.9,155.1L154.9,155.3M156.0,154.2L157.0,154.3M159.0,157.8L160.1,158.1M160.1,158.1L161.1,159.9M162.1,162.4L163.2,162.1M163.2,162.1L164.3,160.9M172.3,164.1L173.4,164.1M176.6,161.2L177.7,161.1M181.9,159.8L182.9,160.1M182.9,160.1L183.9,160.4M183.9,160.4L185.0,159.9M186.0,159.7L187.0,159.9M190.2,159.7L191.2,160.2M191.2,160.2L192.3,160.1M196.7,160.4L197.9,160.8M199.0,160.5L200.1,160.3M202.2,157.7L203.2,158.2M203.2,158.2L204.3,158.2M216.9,157.0L218.0,157.3M223.1,150.4L224.2,150.0M227.4,151.0L228.5,151.1M231.5,149.5L232.5,149.4M234.8,150.3L236.0,149.9M238.3,152.7L239.3,152.2M241.4,149.6L242.4,149.4M244.6,148.7L245.8,150.4M249.2,151.7L250.4,152.2M251.5,150.6L252.6,150.3M253.8,150.8L254.9,150.4M254.9,150.4L256.0,150.2M259.0,151.2L260.0,151.0M264.5,145.8L265.7,144.1M265.7,144.1L266.9,144.3M270.0,145.4L271.0,145.4M279.0,142.7L280.0,142.5M281.0,143.8L282.0,143.4M282.0,143.4L283.0,143.8M283.0,143.8L284.0,143.8M284.0,143.8L285.0,144.2M287.0,145.4L288.0,145.0M291.2,142.4L292.3,142.7M302.7,141.2L303.9,141.2M307.1,143.2L308.2,143.3M310.4,142.7L311.5,143.1M313.7,141.5L314.8,140.8M314.8,140.8L315.9,140.4M317.0,139.2L318.0,138.5M325.7,133.2L326.8,131.1M330.0,130.1L331.0,129.6M333.0,130.1L334.1,130.5M338.4,126.9L339.5,127.4M340.5,128.0L341.6,127.6M353.7,136.5L354.9,136.9M354.9,136.9L356.0,136.7M391.6,143.2L392.7,142.5M396.8,137.0L397.9,136.6M399.1,134.9L400.2,135.0M401.4,134.0L402.6,134.2M402.6,134.2L403.8,134.6M403.8,134.6L405.0,134.3M406.1,133.5L407.2,133.3M407.2,133.3L408.3,133.2M415.7,137.7L416.8,137.9M419.1,135.4L420.3,135.1M426.5,137.1L427.5,139.3M432.1,142.1L433.3,142.1M437.0,138.0L438.0,137.9M439.0,138.8L440.0,138.4M451.0,143.6L452.2,143.7M454.5,140.5L455.7,140.7M459.1,140.5L460.2,140.8M461.3,142.9L462.4,142.7M465.9,142.4L467.0,142.8M476.9,144.3L478.1,144.3M478.1,144.3L479.2,144.7M479.2,144.7L480.4,144.8M490.7,145.7L491.8,144.7M491.8,144.7L492.9,145.4M498.0,143.8L499.1,143.3M502.0,139.3L503.0,139.6M503.0,139.6L504.2,139.7M506.5,138.2L507.6,138.5M508.8,137.5L509.9,137.5M509.9,137.5L510.9,137.8M513.2,135.7L514.4,135.3M516.7,133.9L517.8,135.5M522.3,135.0L523.5,134.9M531.7,133.4L532.9,133.3M537.7,132.1L538.9,132.0M538.9,132.0L539.9,132.2M541.8,130.5L542.8,131.5M552.6,133.7L553.7,135.5M556.0,135.9L557.2,136.0M559.5,133.2L560.6,132.5M560.6,132.5L561.7,132.1M561.7,132.1L562.8,129.1M563.8,130.6L564.7,131.1M570.0,123.2L571.0,123.1M574.0,124.4L574.9,123.6M574.9,123.6L575.9,123.8M575.9,123.8L577.1,121.7M593.3,119.4L594.4,119.7M597.6,119.0L598.7,119.4M620.5,100.7L621.6,100.6M621.6,100.6L622.7,97.9M622.7,97.9L623.8,97.5M630.3,107.8L631.3,109.2M640.0,126.8L641.1,126.4M642.2,127.1L643.3,126.7M643.3,126.7L644.4,127.5M646.3,123.2L647.3,120.7M650.5,112.9L651.6,112.6M651.6,112.6L652.6,113.1M652.6,113.1L653.5,113.4M653.5,113.4L654.5,113.6M663.2,114.7L664.2,115.2M670.5,116.6L671.7,111.7M671.7,111.7L672.9,105.3M682.3,84.8L683.5,81.3M684.5,79.2L685.4,77.6M690.8,69.2L691.9,69.1M693.0,67.5L694.1,67.6M706.8,97.0L707.9,96.6M711.1,89.3L712.1,87.7M714.0,84.4L715.1,84.7M716.2,82.4L717.3,82.0M717.3,82.0L718.4,82.3M749.1,80.2L750.3,80.5M751.5,80.9L752.6,81.0M753.8,80.0L754.9,80.2M754.9,80.2L756.1,79.1M760.1,85.0L761.2,85.2M763.4,87.8L764.5,87.5M766.9,87.1L768.0,87.1M769.0,84.2L769.9,84.1M783.6,87.2L784.7,86.8M794.1,75.3L795.1,76.0M800.8,82.8L802.0,84.3M807.8,87.3L808.9,87.7M811.2,87.9L812.2,88.2M823.7,85.4L824.8,85.3M827.2,88.5L828.5,88.6M828.5,88.6L829.7,89.8M830.7,88.3L831.6,86.1M832.6,84.4L833.6,82.8M834.6,83.2L835.7,83.7M835.7,83.7L836.7,84.1M837.7,84.4L838.7,84.6M838.7,84.6L839.8,83.6M841.8,81.0L842.8,80.4M843.9,79.3L844.9,79.8M847.2,79.0L848.4,79.5M853.0,80.3L854.2,79.4M875.2,75.8L876.3,76.2M876.3,76.2L877.5,75.8M881.0,75.7L882.2,75.6M891.9,77.6L893.0,77.6M893.0,77.6L894.1,77.5M905.9,71.5L907.2,71.4M910.5,61.7L911.6,60.6M924.6,56.2L925.7,56.1M926.8,54.1L927.9,54.1M928.9,53.5L930.0,53.9M930.0,53.9L931.1,53.8M931.1,53.8L932.2,53.5M934.4,53.1L935.5,52.8M936.6,50.7L937.7,50.3M944.2,47.7L945.3,47.5M947.5,49.1L948.5,49.1M949.6,49.7L950.7,49.9M952.9,49.6L954.0,49.4M956.2,49.1L957.3,50.1M957.3,50.1L958.4,50.3M959.4,51.7L960.5,51.9M960.5,51.9L961.6,52.3M966.2,50.4L967.4,50.8" stroke="#e6dc78" stroke-width="1.4" fill="none" stroke-linecap="square"/>
<path d="M6.8,156.0V158.6M60.8,162.0V167.3M62.2,165.1V173.3M72.0,172.4V179.1M73.3,176.5V182.2M112.2,156.3V159.0M127.3,156.1V161.5M162.9,159.2V162.5M218.7,152.8V159.7M221.6,148.8V152.6M242.6,147.4V150.2M263.2,146.2V151.5M324.6,127.9V133.7M330.8,127.5V130.7M342.3,126.5V133.5M343.8,130.4V135.6M347.6,128.7V134.0M359.7,136.5V141.5M366.3,142.0V147.2M371.4,142.2V146.6M375.9,146.2V151.1M377.7,149.2V155.1M383.2,147.0V151.4M387.7,144.5V149.3M444.2,139.9V142.1M470.8,143.2V148.0M514.7,130.1V135.5M516.3,131.0V134.8M552.6,130.2V136.6M582.2,119.3V123.5M615.8,93.0V97.0M617.2,93.6V100.0M618.7,97.5V103.8M626.0,97.8V101.6M629.2,101.6V109.2M631.0,107.4V111.8M632.5,109.0V115.3M656.7,116.8V123.1M658.2,120.1V126.8M669.8,114.0V116.7M676.8,102.2V107.2M680.8,83.9V92.9M697.4,72.2V80.1M698.8,79.3V84.8M701.7,87.3V95.1M704.6,93.3V98.3M711.8,86.1V90.3M732.3,70.4V76.2M734.2,74.1V80.2M737.8,69.9V73.9M739.4,69.3V75.4M740.9,73.5V81.6M774.6,81.5V87.6M797.8,73.9V79.9M800.7,79.4V84.7M802.1,82.5V84.7M807.9,86.0V88.4M816.6,86.2V91.5M823.8,84.1V87.4M826.9,86.5V90.4M847.1,77.5V81.4M880.7,74.5V78.5M884.2,72.5V75.0M898.6,77.8V80.9M905.3,71.1V74.6M909.4,61.6V69.0M912.3,59.4V63.6M913.6,61.2V66.9M924.3,54.7V59.4" stroke="#1e82f0" stroke-width="1.2" fill="none" stroke-linecap="square"/>
<path d="M21.4,157.4V159.6M24.3,155.7V159.6M37.5,158.0V160.6M100.7,164.9V167.5M103.5,163.3V166.4M174.7,161.0V164.1M185.3,158.2V159.4M186.7,157.3V159.5M226.0,151.0V153.4M451.5,141.3V143.6M463.1,141.8V143.3M466.0,142.1V143.4M477.6,145.0V146.7M485.4,140.0V146.4M572.2,123.2V124.9M597.6,116.6V120.2M608.5,99.1V100.8M611.4,95.0V99.2M649.5,112.5V119.1M675.0,99.0V104.0M693.0,66.7V70.3M695.9,67.4V74.7M713.3,82.6V87.9M796.3,74.9V77.0M877.6,75.7V78.1M902.7,72.6V77.7M907.9,66.3V71.9M921.1,55.5V58.4" stroke="#e6dc78" stroke-width="1.2" fill="none" stroke-linecap="square"/>
<path d="M22.9,156.4V160.4M34.3,159.0V161.6M35.8,157.9V161.7M39.2,156.3V159.9M77.8,174.8V179.8M97.9,164.8V168.4M161.2,157.9V163.0M179.5,159.3V162.6M220.2,149.0V155.7M231.8,147.5V152.5M256.8,149.4V152.8M288.7,143.3V146.3M310.4,141.5V144.3M314.8,139.5V142.7M320.8,132.6V136.7M322.6,129.0V134.0M345.6,128.6V135.9M349.4,132.3V137.9M362.7,131.7V136.2M364.5,132.4V143.8M369.8,141.6V144.7M379.7,146.5V156.1M389.1,144.0V147.4M394.9,135.9V140.5M434.2,139.7V143.7M487.1,140.4V142.9M512.9,134.1V140.2M541.1,128.6V133.5M547.7,129.9V136.0M555.7,134.5V138.7M566.4,127.7V131.8M567.9,125.2V130.2M575.2,120.5V124.0M591.4,121.6V125.2M593.0,117.6V124.0M596.2,116.2V118.5M600.7,116.6V122.8M602.5,110.9V117.8M604.1,107.0V113.9M605.6,102.9V108.3M607.1,98.4V104.8M620.1,99.0V104.4M623.1,95.5V101.4M634.3,113.1V140.4M636.1,135.4V141.3M637.6,131.4V136.7M639.1,125.7V133.6M645.1,121.9V127.1M648.0,117.3V122.2M655.2,112.4V119.0M659.6,120.9V125.9M661.0,117.3V122.8M662.5,113.8V120.3M671.4,107.8V117.2M673.2,99.4V110.8M678.8,89.7V107.6M682.6,80.0V86.9M685.7,73.9V80.1M688.6,69.1V75.1M700.2,81.9V89.6M709.0,92.4V97.5M710.4,88.3V94.2M722.0,80.1V85.3M723.5,77.3V81.8M724.9,74.7V78.2M726.4,70.9V76.7M736.0,71.6V80.7M743.8,76.3V81.1M758.3,80.6V85.9M768.7,82.5V87.1M779.8,85.7V90.5M787.6,82.8V88.1M789.1,78.5V84.8M790.5,77.3V79.9M819.5,83.1V88.3M830.4,86.3V92.0M831.9,82.4V87.5M891.0,75.6V77.8M901.4,75.9V80.8M910.9,58.6V64.5M915.1,61.7V66.9M916.7,56.3V63.0M936.6,49.8V54.5M939.6,46.4V51.3" stroke="#ff1a1a" stroke-width="1.2" fill="none" stroke-linecap="square"/>
<path d="M57.0,338.3V342.7M61.0,339.4V349.6M63.0,348.3V355.1M64.6,352.1V354.9M67.2,352.9V357.0M69.0,353.8V357.8M70.8,354.1V356.2M72.2,355.1V360.0M84.7,332.3V335.9M96.8,334.0V338.1M99.7,336.2V339.9M101.0,337.0V341.0M111.0,333.2V338.7M112.5,331.6V334.8M116.8,323.8V328.3M121.2,322.8V326.8M124.1,325.3V327.2M134.6,315.0V318.7M141.8,313.1V317.1M144.7,311.9V315.2M154.8,305.9V309.0M156.3,304.1V307.4M159.2,302.3V307.5M170.9,293.1V297.0M175.6,290.4V291.9M178.9,288.5V294.4M180.8,293.0V299.2M189.8,294.1V299.7M193.2,291.0V294.6M196.6,290.9V295.0M201.3,292.2V294.4M205.6,287.9V291.4M207.1,286.5V291.0M224.5,280.3V284.0M237.6,274.9V277.1M241.9,272.4V276.7M255.0,264.5V268.6M262.6,260.6V263.4M265.4,260.7V263.1M268.3,259.6V263.3M271.3,263.1V267.1M276.5,257.9V261.8M281.4,263.2V270.4M282.9,267.8V273.5M290.1,265.2V269.5M293.0,268.7V271.8M295.9,268.9V271.5M300.2,268.4V272.9M301.7,270.5V274.1M306.0,273.2V277.5M310.8,276.6V280.2M323.1,265.7V274.9M329.3,263.4V266.9M330.8,265.0V270.8M332.4,264.3V271.2M338.0,257.0V259.5M342.7,257.7V268.3M344.6,266.8V268.8M346.4,267.3V272.7M348.0,270.2V275.6M354.0,268.7V272.7M355.4,268.2V273.7M358.3,271.0V273.8M361.2,267.4V273.2M377.0,280.3V289.8M378.6,286.2V290.8M405.0,252.3V256.0M410.5,251.5V261.1M419.2,250.6V260.7M439.9,231.4V233.8M444.9,233.4V239.4M447.8,241.6V245.3M450.8,247.8V250.5M454.4,244.9V248.6M455.9,246.9V250.7M457.3,249.1V252.9M458.8,250.0V253.8M463.9,231.6V242.6M465.3,232.9V237.7M466.8,235.7V240.5M471.7,239.8V242.2M473.4,240.1V242.4M475.1,240.1V243.9M476.8,242.6V245.9M489.2,249.8V257.4M490.7,255.2V261.1M492.1,259.5V261.9M501.0,255.1V261.0M502.8,259.1V262.9M504.4,260.5V267.7M505.9,266.0V271.4M509.4,268.8V273.8M515.6,266.1V271.3M526.0,267.9V271.8M531.2,269.7V273.2M534.7,269.9V272.8M544.7,268.2V271.2M547.6,270.5V272.7M549.4,271.4V280.4M553.2,280.0V284.8M557.7,276.1V282.5M560.6,282.7V290.0M568.6,256.5V273.6M570.4,257.1V265.4M572.2,262.7V267.4M576.6,269.4V274.7M578.1,272.0V278.1M583.8,266.1V274.9M585.3,272.9V278.0M592.7,265.8V271.7M596.2,273.0V276.7M597.8,275.6V280.6M599.2,278.4V283.7M600.8,281.4V286.1M608.6,296.6V302.4M616.5,301.2V305.2M619.7,302.7V306.7M621.2,305.6V308.3M622.8,306.8V313.2M624.5,310.2V316.5M631.3,310.0V318.7M634.8,307.3V313.1M645.6,284.6V288.3M648.7,286.6V289.8M650.2,286.9V290.3M653.0,289.9V293.8M654.5,290.9V294.9M655.9,293.4V297.4M663.4,283.8V288.7M669.3,287.3V292.6M675.9,278.8V286.0M677.3,265.2V280.5M696.1,215.8V233.0M697.3,232.2V244.0M698.4,242.6V253.9M704.6,245.5V248.4M709.3,248.7V252.3M710.9,250.9V257.4M712.4,255.4V259.5M714.0,256.9V261.7M717.1,260.8V264.9M720.2,265.0V268.8" stroke="#1e82f0" stroke-width="1.15" fill="none" stroke-linecap="square"/>
<path d="M59.0,340.3V341.7M75.6,355.3V358.0M76.9,356.4V357.6M86.0,333.7V336.2M87.3,333.8V337.1M90.7,331.9V334.4M93.3,330.8V333.3M103.7,338.2V342.0M108.1,338.2V339.7M119.7,322.6V325.0M122.6,325.0V327.4M136.0,314.3V316.8M137.5,315.3V317.7M140.3,314.6V316.6M147.6,311.0V313.0M169.4,293.6V296.8M182.4,297.0V299.9M188.3,297.5V299.4M191.5,292.6V297.3M198.2,292.6V296.5M208.6,286.8V288.3M212.9,285.3V286.6M234.7,274.8V277.5M236.1,274.8V276.8M239.0,275.8V277.7M243.4,272.2V274.9M244.8,272.6V274.7M247.7,269.5V272.2M249.2,269.6V271.2M252.1,267.5V270.9M261.1,260.7V263.3M272.9,260.4V267.9M279.9,262.9V265.3M284.3,270.6V274.4M297.4,269.6V272.4M303.1,272.2V275.0M317.8,274.7V276.9M339.5,257.8V260.2M352.5,271.7V273.5M356.9,270.7V273.0M359.8,271.2V274.6M369.9,263.6V268.4M373.2,262.9V277.9M380.1,283.5V288.3M381.6,284.0V286.5M387.1,278.8V281.6M388.9,277.5V281.2M412.4,259.3V261.9M415.7,258.6V260.6M417.3,257.4V260.9M434.1,234.0V238.6M443.3,233.4V235.6M446.4,236.6V242.7M460.2,251.1V254.1M481.9,250.0V255.7M487.8,250.1V253.2M493.6,258.2V260.6M507.5,268.9V270.6M520.0,265.7V271.0M521.4,266.3V268.6M524.4,268.0V270.8M538.2,269.5V271.1M541.6,267.5V269.3M546.1,269.4V271.7M615.0,301.7V303.4M618.1,302.9V305.4M644.2,277.8V288.0M662.0,284.4V286.1M666.3,287.0V289.3M667.7,286.8V289.7M683.1,234.3V246.0M685.8,222.2V229.8M689.3,215.9V217.2M692.9,214.6V216.0M718.7,261.9V266.9" stroke="#e6dc78" stroke-width="1.15" fill="none" stroke-linecap="square"/>
<path d="M74.0,355.6V359.6M78.0,345.5V357.9M79.2,337.1V347.6M81.0,332.2V339.4M83.0,331.5V335.0M89.0,331.9V337.0M95.0,330.1V335.0M98.2,334.6V338.3M105.2,338.1V341.5M106.7,338.2V340.2M114.0,328.6V333.3M115.4,326.4V330.9M118.3,323.4V325.5M125.6,322.9V326.8M127.2,320.8V324.9M130.2,318.8V322.8M131.7,317.6V319.7M133.1,315.9V319.2M138.9,313.8V316.1M143.2,312.8V316.5M146.2,311.6V315.3M149.1,310.3V312.6M150.5,310.0V311.6M152.0,308.8V312.6M153.4,307.0V310.6M163.6,299.6V302.8M165.0,297.7V301.5M166.5,296.8V300.2M167.9,294.2V298.0M172.5,292.2V296.5M185.3,297.2V298.9M199.8,293.1V295.8M204.2,288.7V293.2M211.5,284.9V288.8M215.8,284.8V287.4M218.7,284.2V287.4M221.6,283.0V288.0M223.1,281.3V284.8M226.0,280.4V282.9M228.9,276.4V281.8M230.3,275.9V279.5M231.8,273.8V277.6M233.2,274.3V276.1M250.6,268.2V270.9M256.5,263.4V266.7M259.6,262.1V265.0M264.0,260.5V263.7M269.8,261.1V265.2M274.7,258.5V262.6M278.1,259.5V264.8M287.2,266.9V269.6M288.7,265.3V269.7M294.5,268.2V271.7M304.6,272.5V275.7M307.5,274.9V278.7M312.5,277.9V280.7M314.2,278.3V281.2M316.1,274.3V279.3M319.5,272.7V275.4M321.2,272.2V274.4M324.9,264.9V268.1M334.2,261.7V267.2M336.2,257.1V264.1M340.9,257.9V261.0M349.6,272.5V276.8M362.7,264.8V270.0M364.1,264.5V268.5M367.0,267.1V269.7M368.5,266.9V270.0M371.4,262.2V266.5M375.2,276.5V282.7M385.1,279.9V286.4M390.7,276.1V279.8M392.5,274.4V278.9M394.1,267.3V276.1M395.8,264.0V270.0M397.6,261.2V266.9M399.2,261.1V262.9M400.7,258.2V262.2M402.1,255.1V260.3M403.6,251.9V257.4M408.3,252.3V258.7M414.0,258.6V262.0M421.0,248.9V253.3M423.9,246.8V248.9M425.3,244.5V250.1M426.8,243.7V247.3M428.3,240.9V244.4M431.1,238.7V242.4M432.6,237.6V240.5M435.5,233.9V237.5M437.0,234.5V237.0M438.4,232.1V235.5M441.5,231.7V235.6M449.3,244.4V249.0M452.6,244.3V250.4M462.0,240.3V254.2M470.0,238.2V241.7M478.5,244.5V249.4M480.3,247.0V252.2M483.4,254.2V258.3M499.4,255.8V259.1M511.1,270.6V273.2M512.6,268.8V271.4M514.1,267.5V270.5M517.1,268.9V273.5M518.5,268.5V274.0M527.8,268.8V273.1M529.5,270.2V273.7M536.5,269.2V272.4M540.0,266.8V270.9M551.4,277.5V282.8M559.1,276.6V285.9M562.0,284.4V289.8M563.5,280.9V285.7M565.0,277.6V282.1M566.8,270.4V279.4M573.7,265.1V269.0M579.5,272.0V277.4M581.0,269.4V273.9M582.4,266.2V271.2M586.8,275.6V284.3M588.2,276.4V283.8M589.6,270.8V278.4M591.1,265.0V274.2M594.6,270.2V275.0M602.4,283.9V290.0M607.0,293.6V299.0M610.2,299.2V302.3M626.2,314.4V319.7M629.8,316.0V319.8M632.4,303.3V311.8M633.6,303.9V308.8M636.3,304.1V314.4M638.0,296.5V305.9M639.8,281.8V298.9M641.6,268.9V284.5M643.1,269.6V281.1M647.1,285.6V288.8M651.6,288.0V291.8M657.4,292.4V297.8M659.0,288.6V294.8M660.5,284.4V290.2M671.0,291.2V294.9M672.7,288.3V294.4M674.3,283.7V289.4M678.4,248.3V267.2M681.6,244.2V249.5M684.3,227.6V236.0M687.5,216.1V224.5M691.1,214.0V217.9M694.6,214.3V218.4M699.8,249.2V253.6M701.4,247.3V250.5M703.0,245.7V250.2M715.5,260.4V262.6M721.8,267.0V270.8" stroke="#ff1a1a" stroke-width="1.15" fill="none" stroke-linecap="square"/>
<rect x="10.2" y="324.8" width="2" height="1.4" fill="#e6dc78"/>
<rect x="13.2" y="319.5" width="2" height="1.4" fill="#e6dc78"/>
<rect x="19.5" y="314.3" width="2" height="1.4" fill="#e6dc78"/>
<rect x="20.7" y="311.4" width="2" height="1.4" fill="#e6dc78"/>
<rect x="23.0" y="313.7" width="2" height="1.4" fill="#e6dc78"/>
<rect x="24.2" y="316.6" width="2" height="1.4" fill="#e6dc78"/>
<rect x="28.2" y="322.5" width="2" height="1.4" fill="#e6dc78"/>
<rect x="31.2" y="327.7" width="2" height="1.4" fill="#e6dc78"/>
<rect x="39.3" y="325.9" width="2" height="1.4" fill="#e6dc78"/>
<rect x="42.2" y="327.7" width="2" height="1.4" fill="#e6dc78"/>
<rect x="48.7" y="327.2" width="2" height="1.4" fill="#e6dc78"/>
<rect x="51.2" y="333.2" width="2" height="1.4" fill="#e6dc78"/>
<rect x="54.7" y="334.2" width="2" height="1.4" fill="#e6dc78"/>
<rect x="56.2" y="337.0" width="1.8" height="8" fill="#ff1a1a"/>
<rect x="58.7" y="339.0" width="1.8" height="5" fill="#1e82f0"/>
<rect x="61.2" y="343.0" width="1.8" height="9" fill="#1e82f0"/>
<rect x="62.7" y="350.0" width="1.8" height="7" fill="#1e82f0"/>
<rect x="74.2" y="354.0" width="1.8" height="7" fill="#1e82f0"/>
<rect x="76.7" y="353.0" width="1.8" height="6" fill="#ff1a1a"/>
<rect x="77.7" y="341.0" width="1.8" height="11" fill="#ff1a1a"/>
<rect x="567.7" y="255.0" width="1.8" height="10" fill="#ff1a1a"/>
<rect x="569.0" y="258.0" width="1.8" height="8" fill="#1e82f0"/>
<rect x="517.8" y="262.0" width="1.8" height="5" fill="#1e82f0"/>
<rect x="602.2" y="285.0" width="1.8" height="6" fill="#ff1a1a"/>
<rect x="616.2" y="287.0" width="1.8" height="7" fill="#ff1a1a"/>
<rect x="720.7" y="265.0" width="1.7" height="1.3" fill="#1e82f0"/>
<rect x="722.8" y="270.0" width="1.7" height="10" fill="#ff1a1a"/>
<rect x="726.5" y="257.7" width="1.7" height="1.3" fill="#1e82f0"/>
<rect x="725.7" y="264.3" width="1.7" height="1.3" fill="#d4cc70"/>
<rect x="729.4" y="261.4" width="1.7" height="1.3" fill="#ff1a1a"/>
<rect x="733.0" y="248.0" width="1.7" height="9" fill="#1e82f0"/>
<rect x="734.4" y="263.5" width="1.7" height="1.3" fill="#d4cc70"/>
<rect x="738.1" y="264.0" width="1.7" height="3" fill="#1e82f0"/>
<rect x="740.2" y="274.4" width="1.7" height="1.3" fill="#d4cc70"/>
<rect x="742.4" y="270.8" width="1.7" height="1.3" fill="#d4cc70"/>
<rect x="745.3" y="267.2" width="1.7" height="1.3" fill="#d4cc70"/>
<rect x="746.8" y="261.4" width="1.7" height="1.3" fill="#ff1a1a"/>
<rect x="748.2" y="259.2" width="1.7" height="1.3" fill="#d4cc70"/>
<rect x="750.4" y="267.9" width="1.7" height="1.3" fill="#d4cc70"/>
<rect x="752.6" y="257.0" width="1.7" height="6" fill="#ff1a1a"/>
<rect x="754.0" y="256.3" width="1.7" height="1.3" fill="#1e82f0"/>
<rect x="756.2" y="249.8" width="1.7" height="1.3" fill="#d4cc70"/>
<rect x="757.7" y="254.1" width="1.7" height="1.3" fill="#d4cc70"/>
<rect x="762.7" y="254.0" width="1.7" height="8" fill="#1e82f0"/>
<rect x="764.2" y="261.4" width="1.7" height="1.3" fill="#d4cc70"/>
<rect x="768.5" y="254.8" width="1.7" height="1.3" fill="#d4cc70"/>
<rect x="772.2" y="257.0" width="1.7" height="1.3" fill="#d4cc70"/>
<rect x="776.5" y="264.5" width="1.7" height="3" fill="#1e82f0"/>
<rect x="778.7" y="262.1" width="1.7" height="1.3" fill="#d4cc70"/>
<rect x="786.0" y="262.1" width="1.7" height="1.3" fill="#d4cc70"/>
<rect x="790.3" y="249.8" width="1.7" height="1.3" fill="#d4cc70"/>
<rect x="793.2" y="249.8" width="1.7" height="1.3" fill="#d4cc70"/>
<rect x="809.9" y="251.2" width="1.7" height="1.3" fill="#d4cc70"/>
<rect x="813.5" y="257.0" width="1.7" height="1.3" fill="#d4cc70"/>
<rect x="814.2" y="265.0" width="1.7" height="1.3" fill="#1e82f0"/>
<rect x="816.4" y="259.2" width="1.7" height="1.3" fill="#d4cc70"/>
<rect x="818.6" y="251.9" width="1.7" height="1.3" fill="#d4cc70"/>
<rect x="826.6" y="251.9" width="1.7" height="1.3" fill="#d4cc70"/>
<rect x="830.2" y="244.5" width="1.7" height="6" fill="#ff1a1a"/>
<rect x="836.0" y="254.1" width="1.7" height="1.3" fill="#d4cc70"/>
<rect x="843.3" y="246.9" width="1.7" height="3" fill="#d4cc70"/>
<rect x="847.9" y="251.2" width="1.7" height="1.3" fill="#d4cc70"/>
<rect x="851.6" y="244.7" width="1.7" height="1.3" fill="#d4cc70"/>
<rect x="855.2" y="248.3" width="1.7" height="1.3" fill="#d4cc70"/>
<rect x="858.1" y="244.7" width="1.7" height="1.3" fill="#d4cc70"/>
<rect x="865.3" y="243.2" width="1.7" height="1.3" fill="#d4cc70"/>
<rect x="877.0" y="243.2" width="1.7" height="1.3" fill="#d4cc70"/>
<rect x="879.9" y="238.9" width="1.7" height="1.3" fill="#d4cc70"/>
<rect x="881.3" y="241.8" width="1.7" height="1.3" fill="#d4cc70"/>
<rect x="884.2" y="236.0" width="1.7" height="1.3" fill="#d4cc70"/>
<rect x="888.6" y="239.0" width="1.7" height="3" fill="#1e82f0"/>
<rect x="895.8" y="241.8" width="1.7" height="1.3" fill="#1e82f0"/>
<rect x="898.0" y="243.2" width="1.7" height="1.3" fill="#d4cc70"/>
<rect x="900.9" y="241.8" width="1.7" height="1.3" fill="#d4cc70"/>
<rect x="905.3" y="236.7" width="1.7" height="1.3" fill="#d4cc70"/>
<rect x="906.7" y="233.8" width="1.7" height="1.3" fill="#d4cc70"/>
<rect x="909.6" y="234.0" width="1.7" height="3" fill="#1e82f0"/>
<rect x="912.5" y="238.9" width="1.7" height="1.3" fill="#d4cc70"/>
<rect x="916.9" y="237.4" width="1.7" height="1.3" fill="#d4cc70"/>
<rect x="924.1" y="238.9" width="1.7" height="1.3" fill="#d4cc70"/>
<rect x="931.4" y="232.0" width="1.7" height="6" fill="#ff1a1a"/>
<rect x="934.3" y="237.4" width="1.7" height="1.3" fill="#d4cc70"/>
<rect x="937.9" y="238.9" width="1.7" height="1.3" fill="#d4cc70"/>
<rect x="945.2" y="241.8" width="1.7" height="1.3" fill="#1e82f0"/>
<rect x="948.8" y="243.2" width="1.7" height="1.3" fill="#d4cc70"/>
<rect x="950.2" y="245.0" width="1.7" height="3" fill="#1e82f0"/>
<rect x="953.9" y="250.5" width="1.7" height="1.3" fill="#d4cc70"/>
<rect x="957.5" y="254.1" width="1.7" height="1.3" fill="#d4cc70"/>
<rect x="959.0" y="257.0" width="1.7" height="1.3" fill="#d4cc70"/>
<rect x="963.3" y="250.5" width="1.7" height="6" fill="#ff1a1a"/>
<rect x="964.2" y="255.6" width="1.7" height="1.3" fill="#1e82f0"/>
<rect x="965.5" y="255.6" width="1.7" height="1.3" fill="#d4cc70"/>
<rect x="968.4" y="250.5" width="1.7" height="1.3" fill="#d4cc70"/>
<rect x="968" y="59" width="2" height="1" fill="#e6dc78"/>
<path d="M6.90,493.28L7.68,494.24L8.45,495.52L9.22,494.92L10.00,496.69L10.83,497.92L11.67,498.56L12.50,497.28L13.26,499.25L14.02,499.92L14.78,500.39L15.54,502.35L16.30,501.97L17.20,500.81L18.10,501.15L18.93,501.39L19.77,501.55L20.60,502.60L21.36,503.35L22.12,502.46L22.88,504.16L23.64,504.75L24.40,504.21L25.00,503.10L25.60,501.11L26.40,500.47L27.20,501.12L28.00,499.98L28.80,500.15L29.70,501.60L30.60,498.84L31.33,498.34L32.07,499.80L32.80,499.10L33.53,497.15L34.27,497.35L35.00,496.83L35.77,496.13L36.55,494.67L37.33,495.24L38.10,493.89L38.90,495.05L39.70,495.43L40.50,496.16L41.30,496.89L42.02,498.77L42.73,498.14L43.45,497.36L44.17,495.92L44.88,495.69L45.60,495.31L46.40,496.12L47.20,495.75L48.00,496.62L48.80,496.73L49.63,496.07L50.47,496.63L51.30,495.49L52.13,495.33L52.97,494.83L53.80,495.10L54.63,492.84L55.47,488.70L56.30,485.18L56.90,490.30L57.50,494.09L58.13,494.93L58.77,492.99L59.40,494.77L60.17,494.86L60.95,498.56L61.73,500.63L62.50,502.62L63.33,503.08L64.17,501.56L65.00,499.12L65.78,500.31L66.55,500.94L67.32,499.76L68.10,500.23L68.90,502.01L69.70,502.80L70.50,502.55L71.30,502.90L72.08,504.84L72.85,505.93L73.62,509.25L74.40,511.20L75.03,509.12L75.67,507.09L76.30,507.23L77.08,508.91L77.85,508.29L78.62,508.35L79.40,509.18L80.23,512.22L81.07,513.65L81.90,514.44L82.68,513.45L83.45,511.93L84.22,510.59L85.00,508.36L85.76,507.09L86.52,507.82L87.28,507.89L88.04,507.50L88.80,506.95L89.54,506.53L90.28,506.33L91.02,507.21L91.76,506.63L92.50,506.88L93.33,504.53L94.17,503.11L95.00,502.50L95.71,503.32L96.43,503.29L97.14,502.32L97.86,502.29L98.57,504.27L99.29,501.99L100.00,504.21L100.76,502.95L101.52,501.57L102.28,501.81L103.04,500.13L103.80,497.52L104.58,498.84L105.35,496.37L106.12,496.58L106.90,495.22L107.73,492.83L108.57,491.94L109.40,491.25L110.11,493.86L110.83,494.51L111.54,493.68L112.26,494.01L112.97,495.30L113.69,497.05L114.40,497.53L115.23,496.39L116.07,495.18L116.90,493.16L117.68,494.62L118.45,493.74L119.22,494.97L120.00,498.44L120.78,498.76L121.55,498.95L122.32,499.38L123.10,500.86L123.73,498.78L124.37,497.09L125.00,494.87L125.75,495.00L126.50,495.46L127.25,496.55L128.00,497.13L128.83,497.69L129.67,499.14L130.50,499.04L131.28,501.11L132.05,500.77L132.82,500.87L133.60,501.66L134.40,499.36L135.20,497.56L136.00,496.45L136.80,495.88L137.63,497.17L138.47,498.12L139.30,499.50L140.13,501.50L140.97,499.99L141.80,501.77L142.54,501.22L143.28,500.57L144.02,501.34L144.76,499.66L145.50,498.81L146.23,499.11L146.97,501.24L147.70,499.60L148.43,499.00L149.17,501.22L149.90,500.38L150.73,502.22L151.57,501.63L152.40,503.91L153.11,501.65L153.83,501.90L154.54,503.09L155.26,502.11L155.97,502.57L156.69,501.26L157.40,502.28L158.13,501.87L158.87,504.95L159.60,505.49L160.33,507.19L161.07,510.63L161.80,511.12L162.54,511.85L163.28,510.22L164.02,511.12L164.76,511.32L165.50,510.33L166.28,509.63L167.05,511.09L167.82,512.15L168.60,512.08L169.36,512.51L170.12,513.76L170.88,514.34L171.64,517.44L172.40,517.21L173.18,516.74L173.95,515.64L174.72,515.35L175.50,515.30L176.21,515.37L176.93,514.41L177.64,514.89L178.36,515.59L179.07,513.69L179.79,513.62L180.50,514.46L181.26,515.45L182.02,515.49L182.78,514.58L183.54,513.34L184.30,515.37L185.04,514.80L185.78,513.68L186.52,511.84L187.26,510.57L188.00,510.23L188.83,512.22L189.67,514.22L190.50,514.38L191.28,514.27L192.05,513.61L192.82,514.05L193.60,513.91L194.33,513.75L195.07,514.72L195.80,516.43L196.53,515.18L197.27,515.74L198.00,516.39L198.78,516.73L199.55,514.19L200.32,514.45L201.10,513.62L201.93,514.94L202.77,516.22L203.60,516.11L204.36,515.39L205.12,514.98L205.88,512.10L206.64,511.64L207.40,510.96L208.18,512.23L208.95,511.81L209.72,512.31L210.50,513.18L211.33,513.09L212.17,512.86L213.00,511.33L213.73,513.58L214.47,513.96L215.20,514.72L215.93,516.08L216.67,515.62L217.40,517.29L218.14,514.39L218.88,512.11L219.62,509.54L220.36,509.17L221.10,507.34L221.83,505.80L222.57,508.30L223.30,507.31L224.03,508.95L224.77,509.41L225.50,511.65L226.29,510.43L227.07,510.63L227.86,510.23L228.65,509.96L229.44,509.93L230.23,509.46L231.01,509.34L231.80,510.73L232.58,511.46L233.35,511.52L234.12,510.69L234.90,512.82L235.68,510.69L236.45,511.85L237.22,511.83L238.00,511.67L238.71,513.34L239.43,512.35L240.14,510.47L240.86,510.23L241.57,511.52L242.29,510.03L243.00,509.48L243.76,510.23L244.52,511.07L245.28,512.51L246.04,512.55L246.80,514.04L247.58,512.81L248.35,514.19L249.12,514.47L249.90,513.93L250.68,515.51L251.45,515.81L252.22,515.26L253.00,514.77L253.75,514.46L254.50,515.98L255.25,515.43L256.00,515.43L256.80,516.56L257.60,515.86L258.40,517.18L259.20,517.66L260.00,515.89L260.80,517.67L261.60,516.70L262.31,515.83L263.03,515.58L263.74,514.96L264.45,512.02L265.16,511.91L265.88,509.60L266.59,509.90L267.30,506.65L268.02,508.56L268.73,507.68L269.45,509.56L270.17,510.67L270.88,511.74L271.60,511.99L272.40,510.63L273.20,509.44L274.00,509.24L274.80,508.49L275.55,508.02L276.30,507.92L277.05,507.63L277.80,507.76L278.55,506.56L279.30,506.86L280.05,506.13L280.80,504.83L281.55,505.56L282.30,504.05L283.05,505.56L283.80,506.01L284.55,506.36L285.30,506.71L286.05,506.45L286.80,506.26L287.55,506.02L288.30,507.24L289.05,508.21L289.80,507.13L290.55,506.38L291.30,507.43L292.05,507.45L292.80,505.26L293.55,504.71L294.30,504.27L295.05,505.04L295.80,505.40L296.55,503.51L297.30,504.56L297.90,503.87L298.50,505.54L299.27,505.47L300.05,505.07L300.83,503.43L301.60,502.99L302.33,501.72L303.07,501.35L303.80,501.30L304.53,499.54L305.27,499.64L306.00,499.61L306.73,500.82L307.47,500.04L308.20,500.58L308.93,502.94L309.67,502.48L310.40,502.27L311.14,502.00L311.88,500.58L312.62,499.60L313.36,497.69L314.10,496.60L314.86,494.99L315.62,495.59L316.38,495.24L317.14,494.63L317.90,494.65L318.70,495.12L319.50,492.51L320.30,491.34L321.10,491.03L321.90,489.71L322.70,488.45L323.50,489.87L324.21,489.45L324.93,488.63L325.64,490.47L326.36,490.07L327.07,491.40L327.79,493.13L328.50,493.74L329.33,490.57L330.17,489.90L331.00,487.48L331.79,486.65L332.57,487.72L333.36,489.02L334.15,489.17L334.94,489.27L335.73,490.19L336.51,488.85L337.30,489.93L338.07,490.62L338.85,491.28L339.62,491.53L340.40,491.92L341.18,490.92L341.95,491.41L342.73,492.42L343.50,491.51L344.26,491.38L345.02,490.92L345.78,489.87L346.54,489.20L347.30,489.80L348.04,489.78L348.78,490.01L349.52,492.81L350.26,494.08L351.00,493.08L351.71,494.64L352.43,493.43L353.14,494.15L353.86,494.36L354.57,495.95L355.29,496.10L356.00,497.14L356.76,497.34L357.52,498.20L358.28,499.13L359.04,499.00L359.80,498.69L360.52,497.37L361.23,498.03L361.95,496.78L362.67,495.18L363.38,494.83L364.10,493.30L364.90,496.47L365.70,500.13L366.50,504.98L367.30,510.49L368.04,509.79L368.78,506.88L369.52,506.26L370.26,506.78L371.00,507.37L371.71,506.93L372.43,506.46L373.14,504.11L373.86,504.11L374.57,505.23L375.29,504.00L376.00,503.33L376.71,505.00L377.43,502.55L378.14,503.76L378.86,504.79L379.57,504.32L380.29,504.81L381.00,503.21L381.75,504.51L382.50,506.14L383.25,504.49L384.00,505.82L384.79,507.00L385.57,504.57L386.36,505.89L387.15,505.55L387.94,504.00L388.73,505.62L389.51,504.80L390.30,502.84L391.04,504.19L391.78,503.04L392.52,501.11L393.26,499.06L394.00,500.14L394.71,499.71L395.43,500.21L396.14,498.56L396.86,499.69L397.57,500.63L398.29,500.51L399.00,499.15L399.73,499.36L400.47,499.48L401.20,499.29L401.93,500.47L402.67,500.13L403.40,497.50L404.11,499.11L404.83,497.86L405.54,499.75L406.26,498.87L406.97,499.83L407.69,499.86L408.40,499.93L409.17,499.34L409.95,500.47L410.73,503.71L411.50,504.31L412.30,504.58L413.10,503.16L413.90,502.55L414.70,502.84L415.50,501.34L416.30,501.13L417.10,500.33L417.90,502.15L418.70,501.68L419.50,503.80L420.30,505.21L421.04,505.24L421.78,505.57L422.52,503.95L423.26,505.24L424.00,504.33L424.76,505.00L425.52,506.96L426.28,507.94L427.04,510.20L427.80,510.06L428.60,513.30L429.40,512.88L430.20,512.94L431.00,514.11L431.80,515.74L432.60,516.51L433.40,518.98L434.13,517.16L434.87,517.95L435.60,515.67L436.33,515.23L437.07,516.19L437.80,515.33L438.55,515.84L439.30,514.02L440.05,514.21L440.80,516.15L441.55,515.53L442.30,515.23L443.05,515.51L443.80,516.42L444.55,516.70L445.30,517.93L446.13,517.31L446.97,513.71L447.80,513.86L448.57,513.27L449.35,513.90L450.12,514.15L450.90,513.88L451.68,511.77L452.45,513.27L453.23,513.29L454.00,512.19L454.73,510.45L455.47,511.51L456.20,510.33L456.93,509.84L457.67,509.00L458.40,508.11L459.20,508.10L460.00,512.22L460.80,514.04L461.60,514.26L462.40,517.17L463.20,519.35L464.00,519.82L464.79,519.34L465.57,519.79L466.36,520.02L467.15,518.82L467.94,519.33L468.73,519.76L469.51,518.01L470.30,519.17L471.07,518.89L471.85,521.79L472.62,524.14L473.40,524.75L474.20,523.45L475.00,522.45L475.80,521.69L476.60,520.77L477.40,519.85L478.20,518.42L479.00,518.35L479.76,516.88L480.52,516.48L481.28,516.51L482.04,517.17L482.80,515.02L483.54,513.41L484.28,513.59L485.02,511.74L485.76,509.17L486.50,510.03L487.26,508.88L488.02,510.87L488.78,510.70L489.54,513.09L490.30,512.76L491.04,512.94L491.78,512.87L492.52,512.13L493.26,510.61L494.00,510.08L494.71,511.17L495.43,511.38L496.14,512.23L496.86,510.91L497.57,511.25L498.29,511.45L499.00,513.89L499.76,511.01L500.52,511.28L501.28,509.27L502.04,509.32L502.80,507.26L503.51,506.64L504.23,503.55L504.94,504.45L505.66,501.96L506.37,499.92L507.09,500.89L507.80,498.11L508.63,498.36L509.47,495.88L510.30,496.14L511.15,495.56L512.00,494.87L512.76,495.11L513.52,492.97L514.28,493.85L515.04,491.16L515.80,492.52L516.54,491.24L517.28,492.76L518.02,493.92L518.76,493.77L519.50,494.72L520.26,492.35L521.02,494.25L521.78,491.47L522.54,492.74L523.30,492.74L524.07,492.36L524.85,492.02L525.62,491.46L526.40,492.22L527.17,490.00L527.95,491.54L528.73,491.03L529.50,489.20L530.33,490.54L531.17,491.10L532.00,490.99L532.76,491.94L533.52,491.06L534.28,489.91L535.04,487.17L535.80,488.10L536.51,489.16L537.23,489.15L537.94,490.25L538.66,490.87L539.37,490.74L540.09,491.39L540.80,490.79L541.57,492.08L542.35,490.96L543.12,490.92L543.90,491.16L544.67,491.18L545.45,490.55L546.23,490.92L547.00,491.32L547.76,489.78L548.52,487.89L549.28,488.37L550.04,487.23L550.80,484.56L551.51,486.18L552.23,487.22L552.94,485.66L553.66,487.70L554.37,488.38L555.09,487.92L555.80,490.44L556.57,489.57L557.35,488.24L558.12,487.62L558.90,487.77L559.67,485.12L560.45,486.63L561.23,485.09L562.00,483.89L562.80,483.59L563.60,484.14L564.40,482.81L565.20,484.51L566.00,483.23L566.80,484.32L567.60,484.28L568.43,485.76L569.27,485.88L570.10,488.14L570.90,487.41L571.70,486.50L572.50,483.95L573.30,481.54L574.10,481.45L574.90,479.29L575.70,478.36L576.50,476.75L577.30,476.79L578.10,474.65L578.90,472.08L579.67,474.90L580.45,475.70L581.23,476.52L582.00,478.79L582.80,477.48L583.60,478.54L584.40,475.93L585.20,476.06L586.00,473.94L586.80,474.00L587.60,474.19L588.31,475.04L589.03,476.71L589.74,477.72L590.46,479.07L591.17,479.38L591.89,482.36L592.60,482.89L593.31,478.83L594.02,478.50L594.74,474.33L595.45,472.53L596.16,470.70L596.88,468.91L597.59,464.58L598.30,462.47L599.07,465.11L599.85,467.62L600.62,469.13L601.40,471.84L602.23,467.78L603.07,460.57L603.90,456.65L604.68,454.94L605.46,452.27L606.24,449.92L607.02,445.60L607.80,442.65L608.70,438.08L609.60,432.85L610.47,435.98L611.33,438.49L612.20,440.64L613.05,435.12L613.90,426.97L614.58,426.82L615.25,427.21L615.92,428.54L616.60,429.07L617.47,432.72L618.33,435.66L619.20,439.03L620.07,436.71L620.93,432.91L621.80,431.88L622.57,431.54L623.33,431.91L624.10,431.27L624.87,431.20L625.63,431.98L626.40,431.51L627.17,430.49L627.93,432.05L628.70,430.30L629.38,433.14L630.05,437.20L630.73,438.86L631.40,440.70L632.27,447.27L633.13,451.12L634.00,454.25L634.85,464.70L635.70,474.29L636.40,475.35L637.10,477.72L637.80,477.65L638.50,478.50L639.20,481.73L639.90,482.04L640.60,482.82L641.30,484.92L642.00,485.43L642.70,486.91L643.42,483.39L644.13,481.12L644.85,479.01L645.57,477.19L646.28,475.28L647.00,472.12L647.76,471.09L648.51,470.07L649.27,467.59L650.03,463.67L650.79,462.91L651.54,461.33L652.30,457.84L652.98,460.62L653.66,460.43L654.34,460.17L655.02,460.40L655.70,461.06L656.38,463.93L657.05,467.90L657.73,471.22L658.40,474.30L659.08,473.22L659.76,470.75L660.44,470.79L661.12,468.42L661.80,467.09L662.53,465.63L663.27,466.02L664.00,464.08L664.73,463.24L665.47,461.90L666.20,460.93L666.94,460.09L667.69,459.59L668.43,460.67L669.17,460.31L669.91,458.59L670.66,458.31L671.40,458.62L672.10,456.63L672.80,452.23L673.50,448.87L674.20,446.26L674.90,443.30L675.60,446.59L676.30,448.75L677.00,451.92L677.70,456.40L678.40,458.77L679.27,452.17L680.13,447.72L681.00,441.60L681.73,442.87L682.47,440.11L683.20,440.96L683.93,438.23L684.67,437.37L685.40,436.79L686.27,439.65L687.13,442.59L688.00,445.62L688.70,443.76L689.40,441.09L690.10,440.53L690.80,438.80L691.50,435.68L692.37,438.35L693.23,440.99L694.10,444.27L694.80,443.04L695.50,441.22L696.20,439.94L696.90,437.53L697.60,433.71L698.47,434.27L699.33,434.41L700.20,434.38L701.07,439.51L701.93,446.08L702.80,452.38L703.50,451.56L704.20,448.20L704.90,447.91L705.60,447.29L706.30,447.73L707.17,448.40L708.03,451.91L708.90,455.67L709.77,452.80L710.63,448.60L711.50,446.85L712.24,445.15L712.99,441.60L713.73,441.40L714.47,438.80L715.21,435.88L715.96,433.68L716.70,430.93L717.53,432.55L718.35,430.20L719.17,430.73L720.00,430.51L720.83,429.64L721.67,429.50L722.50,427.51L723.21,427.46L723.93,425.21L724.64,425.43L725.36,424.47L726.07,422.65L726.79,422.27L727.50,421.06L728.27,418.71L729.05,418.60L729.83,417.97L730.60,418.60L731.36,420.72L732.12,420.92L732.88,424.48L733.64,424.35L734.40,426.72L735.03,425.11L735.67,420.94L736.30,419.73L737.07,417.14L737.85,417.31L738.62,418.26L739.40,417.30L740.03,419.05L740.67,423.14L741.30,426.37L742.20,422.23L743.10,421.72L743.73,419.80L744.37,422.58L745.00,422.41L745.83,424.61L746.67,426.16L747.50,428.14L748.33,431.05L749.17,434.51L750.00,434.55L750.63,433.04L751.27,430.87L751.90,429.33L752.63,429.17L753.37,430.33L754.10,430.22L754.83,430.07L755.57,431.90L756.30,430.10L756.90,436.59L757.50,439.34L758.23,440.17L758.97,440.70L759.70,442.37L760.43,443.90L761.17,444.54L761.90,444.72L762.73,441.76L763.57,439.26L764.40,437.38L765.03,438.32L765.67,440.07L766.30,441.68L767.02,439.51L767.73,440.95L768.45,438.14L769.17,439.34L769.88,436.37L770.60,435.61L771.36,437.84L772.12,435.93L772.88,435.84L773.64,436.56L774.40,434.51L775.23,437.35L776.07,439.49L776.90,439.96L777.67,437.84L778.45,437.24L779.23,438.20L780.00,435.51L780.76,437.34L781.52,437.66L782.28,438.51L783.04,438.68L783.80,438.90L784.52,439.37L785.23,438.94L785.95,437.44L786.67,436.82L787.38,437.95L788.10,437.69L788.75,435.43L789.40,431.96L790.17,433.38L790.95,431.98L791.73,431.13L792.50,430.09L793.27,429.74L794.05,429.58L794.83,430.27L795.60,429.17L796.40,431.46L797.20,431.43L798.00,434.04L798.80,435.62L799.51,436.27L800.23,438.03L800.94,438.14L801.66,440.01L802.37,441.24L803.09,442.71L803.80,445.63L804.57,443.19L805.35,444.06L806.12,442.68L806.90,440.70L807.67,442.20L808.45,443.27L809.23,444.42L810.00,446.76L810.76,445.95L811.52,445.59L812.28,445.82L813.04,445.19L813.80,444.64L814.57,443.29L815.35,442.35L816.12,440.29L816.90,436.29L817.67,438.81L818.45,440.09L819.23,440.69L820.00,442.48L820.71,440.97L821.43,440.78L822.14,441.56L822.86,440.75L823.57,443.08L824.29,442.18L825.00,442.92L825.73,443.24L826.47,444.04L827.20,444.38L827.93,446.17L828.67,447.13L829.40,448.18L830.17,446.12L830.95,444.91L831.73,444.23L832.50,444.29L833.13,443.49L833.77,443.51L834.40,445.61L835.14,445.41L835.88,442.43L836.62,441.84L837.36,441.45L838.10,440.34L838.86,438.44L839.62,438.43L840.38,437.49L841.14,436.05L841.90,435.37L842.53,435.32L843.17,437.91L843.80,439.77L844.70,436.65L845.60,434.21L846.40,435.42L847.20,434.83L848.00,433.29L848.76,434.10L849.52,433.49L850.28,431.95L851.04,431.69L851.80,430.64L852.63,433.98L853.47,437.22L854.30,438.71L855.04,437.99L855.78,437.20L856.52,438.47L857.26,435.97L858.00,435.85L858.76,435.30L859.52,435.98L860.28,436.73L861.04,436.96L861.80,436.21L862.70,438.67L863.60,438.55L864.33,439.17L865.07,437.92L865.80,437.23L866.53,437.16L867.27,436.25L868.00,436.93L868.80,434.92L869.60,435.55L870.40,434.81L871.20,432.16L872.00,432.29L872.80,432.19L873.60,431.38L874.36,431.93L875.12,430.98L875.88,433.50L876.64,432.54L877.40,432.85L878.14,435.13L878.88,434.69L879.62,434.45L880.36,434.69L881.10,435.69L881.90,435.17L882.70,432.29L883.50,432.30L884.30,430.88L885.07,433.37L885.85,433.61L886.62,434.33L887.40,436.84L888.14,435.43L888.87,435.33L889.61,437.30L890.35,436.33L891.08,435.67L891.82,435.20L892.55,434.91L893.29,435.51L894.03,435.41L894.76,436.66L895.50,435.32L896.30,435.55L897.10,436.28L897.90,436.21L898.70,437.18L899.50,437.33L900.30,437.28L901.10,438.17L901.73,436.92L902.37,432.82L903.00,431.88L903.73,432.83L904.47,432.06L905.20,431.84L905.93,433.02L906.67,432.77L907.40,431.88L908.14,427.74L908.88,426.86L909.62,422.39L910.36,418.79L911.10,414.71L911.93,418.20L912.77,422.47L913.60,425.07L914.36,423.15L915.12,423.95L915.88,423.26L916.64,420.70L917.40,421.30L918.03,417.87L918.67,415.29L919.30,412.35L920.01,412.64L920.73,411.12L921.44,413.02L922.16,410.56L922.87,412.38L923.59,409.53L924.30,410.16L925.04,409.05L925.78,410.16L926.52,407.71L927.26,408.66L928.00,406.27L928.79,406.07L929.58,407.23L930.36,406.89L931.15,408.47L931.94,408.10L932.72,408.72L933.51,409.00L934.30,409.94L935.04,410.06L935.78,407.25L936.52,405.88L937.26,404.78L938.00,402.12L938.76,401.84L939.52,399.28L940.28,399.73L941.04,399.65L941.80,397.53L942.54,397.29L943.28,399.75L944.02,399.78L944.76,398.95L945.50,398.80L946.33,398.86L947.17,398.48L948.00,397.28L948.76,400.20L949.52,400.82L950.28,402.84L951.04,403.48L951.80,405.94L952.54,403.51L953.28,401.52L954.02,399.85L954.76,399.17L955.50,396.92L956.21,396.93L956.93,396.10L957.64,398.15L958.36,397.79L959.07,398.79L959.79,397.47L960.50,397.13L961.23,396.22L961.97,396.43L962.70,396.35L963.43,395.18L964.17,395.90L964.90,393.99L965.67,395.89L966.45,393.90L967.23,393.97L968.00,393.81L968.63,400.55L969.27,405.79L969.90,410.30" stroke="#ff0000" stroke-width="1.6" fill="none" stroke-linejoin="miter"/>
<path transform="translate(6.30,40.40) scale(0.921)" d="M0.6,1.6H3.4V8.4H0.6ZM0.6,5H3.4M4.6,2.4H9.6M7,0.4V4.4M5,4.4H9.6M4.4,6.4H9.8M8,4.4V9.4L6.8,9.2M5.6,7.4L6.6,8.4" fill="none" stroke="#d6d6d6" stroke-width="0.98" stroke-linecap="square"/>
<path transform="translate(16.10,40.40) scale(0.921)" d="M3.2,0.4V1.6M0.4,1.8H6M2.4,1.8L0.6,4.8H5M4.2,2.8L0.8,8M5.4,5.6L0.4,9.6M3.4,7.6L5.6,9.6M7.2,1.6V7.2M9.2,0.4V9.4L8,9.2" fill="none" stroke="#d6d6d6" stroke-width="0.98" stroke-linecap="square"/>
<text transform="translate(25.60,49) scale(0.76,1)" x="3.22 9.67 16.12 22.57 29.01 35.46 41.91" y="0" text-anchor="middle" fill="#d6d6d6" font-weight="normal" font-size="10.0">:06:00 </text>
<path transform="translate(60.20,40.40) scale(0.921)" d="M0.4,3.6H4.6M2.6,0.4L1,8L4.6,9.6M3.8,3.6L1.6,9.6M6.6,0.4L5,4H9.4M8.4,2.4L9.6,4M5.6,5.8H9V9.4H5.6Z" fill="none" stroke="#d6d6d6" stroke-width="0.98" stroke-linecap="square"/>
<path transform="translate(70.00,40.40) scale(0.921)" d="M2.6,0.4L0.4,4M1.6,2.8V9.6M3.6,1.6H9.6M6.6,0.4V2.8M4.8,2.8H8.6V8H4.8ZM4.8,4.6H8.6M4.8,6.4H8.6M3.6,9.4H9.6M3.8,2.8V9.4" fill="none" stroke="#d6d6d6" stroke-width="0.98" stroke-linecap="square"/>
<text transform="translate(79.50,49) scale(0.76,1)" x="3.22 9.67 16.12 22.57 29.01 35.46 41.91 48.36" y="0" text-anchor="middle" fill="#d6d6d6" font-weight="normal" font-size="10.0">:11,719 </text>
<path transform="translate(119.00,40.40) scale(0.921)" d="M5,0.2V1.6M0.4,1.6H9.6M3,2.8H7V4.4H3ZM1,5.8V9.6M1,5.8H9V9.4L8,9.6M3.4,7H6.6V8.6H3.4Z" fill="none" stroke="#d6d6d6" stroke-width="0.98" stroke-linecap="square"/>
<path transform="translate(128.80,40.40) scale(0.921)" d="M2.6,0.4L0.4,4M1.6,2.8V9.6M3.6,1.6H9.6M6.6,0.4V2.8M4.8,2.8H8.6V8H4.8ZM4.8,4.6H8.6M4.8,6.4H8.6M3.6,9.4H9.6M3.8,2.8V9.4" fill="none" stroke="#d6d6d6" stroke-width="0.98" stroke-linecap="square"/>
<text transform="translate(138.30,49) scale(0.76,1)" x="3.22 9.67 16.12 22.57 29.01 35.46 41.91 48.36" y="0" text-anchor="middle" fill="#d6d6d6" font-weight="normal" font-size="10.0">:11,719 </text>
<path transform="translate(177.80,40.40) scale(0.921)" d="M5,0.2V1.4M1,3V1.6H9V3M4,3.2L2,8M0.4,5.6H9.6M7,4.2L5,9.6M2.8,7.2L8.4,9.6" fill="none" stroke="#d6d6d6" stroke-width="0.98" stroke-linecap="square"/>
<path transform="translate(187.60,40.40) scale(0.921)" d="M2.6,0.4L0.4,4M1.6,2.8V9.6M3.6,1.6H9.6M6.6,0.4V2.8M4.8,2.8H8.6V8H4.8ZM4.8,4.6H8.6M4.8,6.4H8.6M3.6,9.4H9.6M3.8,2.8V9.4" fill="none" stroke="#d6d6d6" stroke-width="0.98" stroke-linecap="square"/>
<text transform="translate(197.10,49) scale(0.76,1)" x="3.22 9.67 16.12 22.57 29.01 35.46 41.91 48.36" y="0" text-anchor="middle" fill="#d6d6d6" font-weight="normal" font-size="10.0">:11,719 </text>
<path transform="translate(236.60,40.40) scale(0.921)" d="M2.6,0.4L1,3L3.6,4M3.2,1.8L1,6H4M2.6,6V9.6M1.2,7.4L0.4,9M4,7.4L4.6,9M6.6,0.4L5,3M6,1.6H9.2L5.4,5.6M6.4,2.6L9.6,5.6M7,6.6L8.2,7.2M6.6,8.6L8.6,9.6" fill="none" stroke="#d6d6d6" stroke-width="0.98" stroke-linecap="square"/>
<path transform="translate(246.40,40.40) scale(0.921)" d="M2.6,0.4L0.4,4M1.6,2.8V9.6M3.6,1.6H9.6M6.6,0.4V2.8M4.8,2.8H8.6V8H4.8ZM4.8,4.6H8.6M4.8,6.4H8.6M3.6,9.4H9.6M3.8,2.8V9.4" fill="none" stroke="#d6d6d6" stroke-width="0.98" stroke-linecap="square"/>
<text transform="translate(255.90,49) scale(0.76,1)" x="3.22 9.67 16.12 22.57 29.01 35.46 41.91" y="0" text-anchor="middle" fill="#d6d6d6" font-weight="normal" font-size="10.0">:11,719</text>
<path transform="translate(6.30,207.40) scale(0.921)" d="M0.6,1.6H3.4V8.4H0.6ZM0.6,5H3.4M4.6,2.4H9.6M7,0.4V4.4M5,4.4H9.6M4.4,6.4H9.8M8,4.4V9.4L6.8,9.2M5.6,7.4L6.6,8.4" fill="none" stroke="#d6d6d6" stroke-width="0.98" stroke-linecap="square"/>
<path transform="translate(16.10,207.40) scale(0.921)" d="M3.2,0.4V1.6M0.4,1.8H6M2.4,1.8L0.6,4.8H5M4.2,2.8L0.8,8M5.4,5.6L0.4,9.6M3.4,7.6L5.6,9.6M7.2,1.6V7.2M9.2,0.4V9.4L8,9.2" fill="none" stroke="#d6d6d6" stroke-width="0.98" stroke-linecap="square"/>
<text transform="translate(25.60,216) scale(0.76,1)" x="3.22 9.67 16.12 22.57 29.01 35.46 41.91" y="0" text-anchor="middle" fill="#d6d6d6" font-weight="normal" font-size="10.0">:06:00 </text>
<path transform="translate(60.20,207.40) scale(0.921)" d="M0.4,3.6H4.6M2.6,0.4L1,8L4.6,9.6M3.8,3.6L1.6,9.6M6.6,0.4L5,4H9.4M8.4,2.4L9.6,4M5.6,5.8H9V9.4H5.6Z" fill="none" stroke="#d6d6d6" stroke-width="0.98" stroke-linecap="square"/>
<path transform="translate(70.00,207.40) scale(0.921)" d="M2.6,0.4L0.4,4M1.6,2.8V9.6M3.6,1.6H9.6M6.6,0.4V2.8M4.8,2.8H8.6V8H4.8ZM4.8,4.6H8.6M4.8,6.4H8.6M3.6,9.4H9.6M3.8,2.8V9.4" fill="none" stroke="#d6d6d6" stroke-width="0.98" stroke-linecap="square"/>
<text transform="translate(79.50,216) scale(0.76,1)" x="3.22 9.67 16.12 22.57 29.01 35.46 41.91" y="0" text-anchor="middle" fill="#d6d6d6" font-weight="normal" font-size="10.0">:4,910 </text>
<path transform="translate(114.10,207.40) scale(0.921)" d="M5,0.2V1.6M0.4,1.6H9.6M3,2.8H7V4.4H3ZM1,5.8V9.6M1,5.8H9V9.4L8,9.6M3.4,7H6.6V8.6H3.4Z" fill="none" stroke="#d6d6d6" stroke-width="0.98" stroke-linecap="square"/>
<path transform="translate(123.90,207.40) scale(0.921)" d="M2.6,0.4L0.4,4M1.6,2.8V9.6M3.6,1.6H9.6M6.6,0.4V2.8M4.8,2.8H8.6V8H4.8ZM4.8,4.6H8.6M4.8,6.4H8.6M3.6,9.4H9.6M3.8,2.8V9.4" fill="none" stroke="#d6d6d6" stroke-width="0.98" stroke-linecap="square"/>
<text transform="translate(133.40,216) scale(0.76,1)" x="3.22 9.67 16.12 22.57 29.01 35.46 41.91" y="0" text-anchor="middle" fill="#d6d6d6" font-weight="normal" font-size="10.0">:4,910 </text>
<path transform="translate(168.00,207.40) scale(0.921)" d="M5,0.2V1.4M1,3V1.6H9V3M4,3.2L2,8M0.4,5.6H9.6M7,4.2L5,9.6M2.8,7.2L8.4,9.6" fill="none" stroke="#d6d6d6" stroke-width="0.98" stroke-linecap="square"/>
<path transform="translate(177.80,207.40) scale(0.921)" d="M2.6,0.4L0.4,4M1.6,2.8V9.6M3.6,1.6H9.6M6.6,0.4V2.8M4.8,2.8H8.6V8H4.8ZM4.8,4.6H8.6M4.8,6.4H8.6M3.6,9.4H9.6M3.8,2.8V9.4" fill="none" stroke="#d6d6d6" stroke-width="0.98" stroke-linecap="square"/>
<text transform="translate(187.30,216) scale(0.76,1)" x="3.22 9.67 16.12 22.57 29.01 35.46 41.91" y="0" text-anchor="middle" fill="#d6d6d6" font-weight="normal" font-size="10.0">:4,910 </text>
<path transform="translate(221.90,207.40) scale(0.921)" d="M2.6,0.4L1,3L3.6,4M3.2,1.8L1,6H4M2.6,6V9.6M1.2,7.4L0.4,9M4,7.4L4.6,9M6.6,0.4L5,3M6,1.6H9.2L5.4,5.6M6.4,2.6L9.6,5.6M7,6.6L8.2,7.2M6.6,8.6L8.6,9.6" fill="none" stroke="#d6d6d6" stroke-width="0.98" stroke-linecap="square"/>
<path transform="translate(231.70,207.40) scale(0.921)" d="M2.6,0.4L0.4,4M1.6,2.8V9.6M3.6,1.6H9.6M6.6,0.4V2.8M4.8,2.8H8.6V8H4.8ZM4.8,4.6H8.6M4.8,6.4H8.6M3.6,9.4H9.6M3.8,2.8V9.4" fill="none" stroke="#d6d6d6" stroke-width="0.98" stroke-linecap="square"/>
<text transform="translate(241.20,216) scale(0.76,1)" x="3.22 9.67 16.12 22.57 29.01 35.46" y="0" text-anchor="middle" fill="#d6d6d6" font-weight="normal" font-size="10.0">:4,910</text>
<text transform="translate(7.00,397) scale(0.76,1)" x="3.22" y="0" text-anchor="middle" fill="#d6d6d6" font-weight="normal" font-size="10.0">[</text>
<path transform="translate(12.20,388.40) scale(0.921)" d="M0.8,4.2L5,0.6L9.2,4.2M3,4.6H7M1.8,6.4H8.2M5,4.6V9.4M3,7.2L3.8,8.6M7,7.2L6.2,8.6M0.8,9.4H9.2" fill="none" stroke="#d6d6d6" stroke-width="0.98" stroke-linecap="square"/>
<text transform="translate(21.70,397) scale(0.76,1)" x="3.22 9.67 16.12 22.57 29.01 35.46 41.91 48.36 54.80 61.25 67.70 74.14 80.59" y="0" text-anchor="middle" fill="#d6d6d6" font-weight="normal" font-size="10.0"> 25/04 11,719</text>
<path d="M87.50,390.60L93.10,396.20M93.10,390.60L87.50,396.20" stroke="#d6d6d6" stroke-width="0.9" fill="none"/>
<text transform="translate(95.20,397) scale(0.76,1)" x="3.22 9.67 16.12 22.57 29.01" y="0" text-anchor="middle" fill="#d6d6d6" font-weight="normal" font-size="10.0">1.00]</text>
<path d="M120.70,393.40H128.50" stroke="#d6d6d6" stroke-width="1" fill="none"/>
<text transform="translate(129.50,397) scale(0.76,1)" x="3.22" y="0" text-anchor="middle" fill="#d6d6d6" font-weight="normal" font-size="10.0">[</text>
<path transform="translate(134.70,388.40) scale(0.921)" d="M5.4,0.2L4.4,1.6M1.6,1.8H8.4V9.4H1.6ZM1.6,5.4H8.4M1.6,9.2H8.4" fill="none" stroke="#d6d6d6" stroke-width="0.98" stroke-linecap="square"/>
<path transform="translate(144.50,388.40) scale(0.921)" d="M0.8,4.2L5,0.6L9.2,4.2M3,4.6H7M1.8,6.4H8.2M5,4.6V9.4M3,7.2L3.8,8.6M7,7.2L6.2,8.6M0.8,9.4H9.2" fill="none" stroke="#d6d6d6" stroke-width="0.98" stroke-linecap="square"/>
<text transform="translate(154.00,397) scale(0.76,1)" x="3.22 9.67 16.12 22.57 29.01 35.46 41.91 48.36 54.80 61.25 67.70 74.14" y="0" text-anchor="middle" fill="#d6d6d6" font-weight="normal" font-size="10.0"> 25/04 4,910</text>
<path d="M214.90,390.60L220.50,396.20M220.50,390.60L214.90,396.20" stroke="#d6d6d6" stroke-width="0.9" fill="none"/>
<text transform="translate(222.60,397) scale(0.76,1)" x="3.22 9.67 16.12 22.57 29.01 35.46" y="0" text-anchor="middle" fill="#d6d6d6" font-weight="normal" font-size="10.0">1.00] </text>
<path transform="translate(252.30,388.40) scale(0.921)" d="M2.6,0.4L1,3L3.6,4M3.2,1.8L1,6H4M2.6,6V9.6M1.2,7.4L0.4,9M4,7.4L4.6,9M6.6,0.4L5,3M6,1.6H9.2L5.4,5.6M6.4,2.6L9.6,5.6M7,6.6L8.2,7.2M6.6,8.6L8.6,9.6" fill="none" stroke="#d6d6d6" stroke-width="0.98" stroke-linecap="square"/>
<path transform="translate(262.10,388.40) scale(0.921)" d="M2.6,0.4L0.4,4M1.6,2.8V9.6M3.6,1.6H9.6M6.6,0.4V2.8M4.8,2.8H8.6V8H4.8ZM4.8,4.6H8.6M4.8,6.4H8.6M3.6,9.4H9.6M3.8,2.8V9.4" fill="none" stroke="#d6d6d6" stroke-width="0.98" stroke-linecap="square"/>
<text transform="translate(271.60,397) scale(0.76,1)" x="3.22" y="0" text-anchor="middle" fill="#d6d6d6" font-weight="normal" font-size="10.0"> </text>
<path transform="translate(276.80,388.40) scale(0.921)" d="M0.6,1.6H3.4V8.4H0.6ZM0.6,5H3.4M4.6,2.4H9.6M7,0.4V4.4M5,4.4H9.6M4.4,6.4H9.8M8,4.4V9.4L6.8,9.2M5.6,7.4L6.6,8.4" fill="none" stroke="#d6d6d6" stroke-width="0.98" stroke-linecap="square"/>
<path transform="translate(286.60,388.40) scale(0.921)" d="M3.2,0.4V1.6M0.4,1.8H6M2.4,1.8L0.6,4.8H5M4.2,2.8L0.8,8M5.4,5.6L0.4,9.6M3.4,7.6L5.6,9.6M7.2,1.6V7.2M9.2,0.4V9.4L8,9.2" fill="none" stroke="#d6d6d6" stroke-width="0.98" stroke-linecap="square"/>
<text transform="translate(296.10,397) scale(0.76,1)" x="3.22 9.67 16.12 22.57 29.01 35.46 41.91 48.36 54.80 61.25 67.70 74.14" y="0" text-anchor="middle" fill="#d6d6d6" font-weight="normal" font-size="10.0">:06:00 6,809</text>
<text transform="translate(25.00,196.8) scale(0.76,1)" x="3.22 9.67" y="0" text-anchor="middle" fill="#c8c8c8" font-weight="normal" font-size="10.0">05</text>
<text transform="translate(43.00,196.8) scale(0.76,1)" x="3.22 9.67" y="0" text-anchor="middle" fill="#d8d8d8" font-weight="bold" font-size="10.0">06</text>
<text transform="translate(69.00,196.8) scale(0.76,1)" x="3.22 9.67" y="0" text-anchor="middle" fill="#c8c8c8" font-weight="normal" font-size="10.0">09</text>
<text transform="translate(117.00,196.8) scale(0.76,1)" x="3.22 9.67" y="0" text-anchor="middle" fill="#c8c8c8" font-weight="normal" font-size="10.0">10</text>
<text transform="translate(165.00,196.8) scale(0.76,1)" x="3.22 9.67" y="0" text-anchor="middle" fill="#c8c8c8" font-weight="normal" font-size="10.0">11</text>
<text transform="translate(214.00,196.8) scale(0.76,1)" x="3.22 9.67" y="0" text-anchor="middle" fill="#c8c8c8" font-weight="normal" font-size="10.0">12</text>
<text transform="translate(261.00,196.8) scale(0.76,1)" x="3.22 9.67" y="0" text-anchor="middle" fill="#c8c8c8" font-weight="normal" font-size="10.0">13</text>
<text transform="translate(309.00,196.8) scale(0.76,1)" x="3.22 9.67" y="0" text-anchor="middle" fill="#c8c8c8" font-weight="normal" font-size="10.0">14</text>
<text transform="translate(345.00,196.8) scale(0.76,1)" x="3.22 9.67" y="0" text-anchor="middle" fill="#c8c8c8" font-weight="normal" font-size="10.0">15</text>
<text transform="translate(365.00,196.8) scale(0.76,1)" x="3.22 9.67" y="0" text-anchor="middle" fill="#c8c8c8" font-weight="normal" font-size="10.0">16</text>
<text transform="translate(390.00,196.8) scale(0.76,1)" x="3.22 9.67" y="0" text-anchor="middle" fill="#c8c8c8" font-weight="normal" font-size="10.0">17</text>
<text transform="translate(436.00,196.8) scale(0.76,1)" x="3.22 9.67" y="0" text-anchor="middle" fill="#c8c8c8" font-weight="normal" font-size="10.0">18</text>
<text transform="translate(482.00,196.8) scale(0.76,1)" x="3.22 9.67" y="0" text-anchor="middle" fill="#c8c8c8" font-weight="normal" font-size="10.0">19</text>
<text transform="translate(529.00,196.8) scale(0.76,1)" x="3.22 9.67" y="0" text-anchor="middle" fill="#c8c8c8" font-weight="normal" font-size="10.0">20</text>
<text transform="translate(577.00,196.8) scale(0.76,1)" x="3.22 9.67" y="0" text-anchor="middle" fill="#c8c8c8" font-weight="normal" font-size="10.0">21</text>
<text transform="translate(625.00,196.8) scale(0.76,1)" x="3.22 9.67" y="0" text-anchor="middle" fill="#c8c8c8" font-weight="normal" font-size="10.0">22</text>
<text transform="translate(673.00,196.8) scale(0.76,1)" x="3.22 9.67" y="0" text-anchor="middle" fill="#c8c8c8" font-weight="normal" font-size="10.0">23</text>
<text transform="translate(722.00,196.8) scale(0.76,1)" x="3.22 9.67" y="0" text-anchor="middle" fill="#c8c8c8" font-weight="normal" font-size="10.0">00</text>
<text transform="translate(768.00,196.8) scale(0.76,1)" x="3.22 9.67" y="0" text-anchor="middle" fill="#c8c8c8" font-weight="normal" font-size="10.0">01</text>
<text transform="translate(814.00,196.8) scale(0.76,1)" x="3.22 9.67" y="0" text-anchor="middle" fill="#c8c8c8" font-weight="normal" font-size="10.0">02</text>
<text transform="translate(849.00,196.8) scale(0.76,1)" x="3.22 9.67" y="0" text-anchor="middle" fill="#c8c8c8" font-weight="normal" font-size="10.0">03</text>
<text transform="translate(882.00,196.8) scale(0.76,1)" x="3.22 9.67" y="0" text-anchor="middle" fill="#c8c8c8" font-weight="normal" font-size="10.0">04</text>
<text transform="translate(927.00,196.8) scale(0.76,1)" x="3.22 9.67" y="0" text-anchor="middle" fill="#c8c8c8" font-weight="normal" font-size="10.0">05</text>
<text transform="translate(957.00,196.8) scale(0.76,1)" x="3.22 9.67" y="0" text-anchor="middle" fill="#c8c8c8" font-weight="normal" font-size="10.0">06</text>
<text transform="translate(723.00,185) scale(0.76,1)" x="3.22 9.67" y="0" text-anchor="middle" fill="#c8c8c8" font-weight="normal" font-size="10.0">10</text>
<text transform="translate(25.00,378.4) scale(0.76,1)" x="3.22 9.67" y="0" text-anchor="middle" fill="#c8c8c8" font-weight="normal" font-size="10.0">05</text>
<text transform="translate(43.00,378.4) scale(0.76,1)" x="3.22 9.67" y="0" text-anchor="middle" fill="#d8d8d8" font-weight="bold" font-size="10.0">06</text>
<text transform="translate(69.00,378.4) scale(0.76,1)" x="3.22 9.67" y="0" text-anchor="middle" fill="#c8c8c8" font-weight="normal" font-size="10.0">09</text>
<text transform="translate(117.00,378.4) scale(0.76,1)" x="3.22 9.67" y="0" text-anchor="middle" fill="#c8c8c8" font-weight="normal" font-size="10.0">10</text>
<text transform="translate(165.00,378.4) scale(0.76,1)" x="3.22 9.67" y="0" text-anchor="middle" fill="#c8c8c8" font-weight="normal" font-size="10.0">11</text>
<text transform="translate(214.00,378.4) scale(0.76,1)" x="3.22 9.67" y="0" text-anchor="middle" fill="#c8c8c8" font-weight="normal" font-size="10.0">12</text>
<text transform="translate(261.00,378.4) scale(0.76,1)" x="3.22 9.67" y="0" text-anchor="middle" fill="#c8c8c8" font-weight="normal" font-size="10.0">13</text>
<text transform="translate(309.00,378.4) scale(0.76,1)" x="3.22 9.67" y="0" text-anchor="middle" fill="#c8c8c8" font-weight="normal" font-size="10.0">14</text>
<text transform="translate(345.00,378.4) scale(0.76,1)" x="3.22 9.67" y="0" text-anchor="middle" fill="#c8c8c8" font-weight="normal" font-size="10.0">15</text>
<text transform="translate(365.00,378.4) scale(0.76,1)" x="3.22 9.67" y="0" text-anchor="middle" fill="#c8c8c8" font-weight="normal" font-size="10.0">16</text>
<text transform="translate(390.00,378.4) scale(0.76,1)" x="3.22 9.67" y="0" text-anchor="middle" fill="#c8c8c8" font-weight="normal" font-size="10.0">17</text>
<text transform="translate(436.00,378.4) scale(0.76,1)" x="3.22 9.67" y="0" text-anchor="middle" fill="#c8c8c8" font-weight="normal" font-size="10.0">18</text>
<text transform="translate(482.00,378.4) scale(0.76,1)" x="3.22 9.67" y="0" text-anchor="middle" fill="#c8c8c8" font-weight="normal" font-size="10.0">19</text>
<text transform="translate(529.00,378.4) scale(0.76,1)" x="3.22 9.67" y="0" text-anchor="middle" fill="#c8c8c8" font-weight="normal" font-size="10.0">20</text>
<text transform="translate(577.00,378.4) scale(0.76,1)" x="3.22 9.67" y="0" text-anchor="middle" fill="#c8c8c8" font-weight="normal" font-size="10.0">21</text>
<text transform="translate(625.00,378.4) scale(0.76,1)" x="3.22 9.67" y="0" text-anchor="middle" fill="#c8c8c8" font-weight="normal" font-size="10.0">22</text>
<text transform="translate(673.00,378.4) scale(0.76,1)" x="3.22 9.67" y="0" text-anchor="middle" fill="#c8c8c8" font-weight="normal" font-size="10.0">23</text>
<text transform="translate(722.00,378.4) scale(0.76,1)" x="3.22 9.67" y="0" text-anchor="middle" fill="#c8c8c8" font-weight="normal" font-size="10.0">00</text>
<text transform="translate(768.00,378.4) scale(0.76,1)" x="3.22 9.67" y="0" text-anchor="middle" fill="#c8c8c8" font-weight="normal" font-size="10.0">01</text>
<text transform="translate(814.00,378.4) scale(0.76,1)" x="3.22 9.67" y="0" text-anchor="middle" fill="#c8c8c8" font-weight="normal" font-size="10.0">02</text>
<text transform="translate(849.00,378.4) scale(0.76,1)" x="3.22 9.67" y="0" text-anchor="middle" fill="#c8c8c8" font-weight="normal" font-size="10.0">03</text>
<text transform="translate(882.00,378.4) scale(0.76,1)" x="3.22 9.67" y="0" text-anchor="middle" fill="#c8c8c8" font-weight="normal" font-size="10.0">04</text>
<text transform="translate(927.00,378.4) scale(0.76,1)" x="3.22 9.67" y="0" text-anchor="middle" fill="#c8c8c8" font-weight="normal" font-size="10.0">05</text>
<text transform="translate(957.00,378.4) scale(0.76,1)" x="3.22 9.67" y="0" text-anchor="middle" fill="#c8c8c8" font-weight="normal" font-size="10.0">06</text>
<text transform="translate(723.00,367) scale(0.76,1)" x="3.22 9.67" y="0" text-anchor="middle" fill="#c8c8c8" font-weight="normal" font-size="10.0">10</text>
<text transform="translate(25.00,541.4) scale(0.76,1)" x="3.22 9.67" y="0" text-anchor="middle" fill="#c8c8c8" font-weight="normal" font-size="10.0">05</text>
<text transform="translate(43.00,541.4) scale(0.76,1)" x="3.22 9.67" y="0" text-anchor="middle" fill="#d8d8d8" font-weight="bold" font-size="10.0">06</text>
<text transform="translate(69.00,541.4) scale(0.76,1)" x="3.22 9.67" y="0" text-anchor="middle" fill="#c8c8c8" font-weight="normal" font-size="10.0">09</text>
<text transform="translate(117.00,541.4) scale(0.76,1)" x="3.22 9.67" y="0" text-anchor="middle" fill="#c8c8c8" font-weight="normal" font-size="10.0">10</text>
<text transform="translate(165.00,541.4) scale(0.76,1)" x="3.22 9.67" y="0" text-anchor="middle" fill="#c8c8c8" font-weight="normal" font-size="10.0">11</text>
<text transform="translate(214.00,541.4) scale(0.76,1)" x="3.22 9.67" y="0" text-anchor="middle" fill="#c8c8c8" font-weight="normal" font-size="10.0">12</text>
<text transform="translate(261.00,541.4) scale(0.76,1)" x="3.22 9.67" y="0" text-anchor="middle" fill="#c8c8c8" font-weight="normal" font-size="10.0">13</text>
<text transform="translate(309.00,541.4) scale(0.76,1)" x="3.22 9.67" y="0" text-anchor="middle" fill="#c8c8c8" font-weight="normal" font-size="10.0">14</text>
<text transform="translate(345.00,541.4) scale(0.76,1)" x="3.22 9.67" y="0" text-anchor="middle" fill="#c8c8c8" font-weight="normal" font-size="10.0">15</text>
<text transform="translate(365.00,541.4) scale(0.76,1)" x="3.22 9.67" y="0" text-anchor="middle" fill="#c8c8c8" font-weight="normal" font-size="10.0">16</text>
<text transform="translate(390.00,541.4) scale(0.76,1)" x="3.22 9.67" y="0" text-anchor="middle" fill="#c8c8c8" font-weight="normal" font-size="10.0">17</text>
<text transform="translate(436.00,541.4) scale(0.76,1)" x="3.22 9.67" y="0" text-anchor="middle" fill="#c8c8c8" font-weight="normal" font-size="10.0">18</text>
<text transform="translate(482.00,541.4) scale(0.76,1)" x="3.22 9.67" y="0" text-anchor="middle" fill="#c8c8c8" font-weight="normal" font-size="10.0">19</text>
<text transform="translate(529.00,541.4) scale(0.76,1)" x="3.22 9.67" y="0" text-anchor="middle" fill="#c8c8c8" font-weight="normal" font-size="10.0">20</text>
<text transform="translate(577.00,541.4) scale(0.76,1)" x="3.22 9.67" y="0" text-anchor="middle" fill="#c8c8c8" font-weight="normal" font-size="10.0">21</text>
<text transform="translate(625.00,541.4) scale(0.76,1)" x="3.22 9.67" y="0" text-anchor="middle" fill="#c8c8c8" font-weight="normal" font-size="10.0">22</text>
<text transform="translate(673.00,541.4) scale(0.76,1)" x="3.22 9.67" y="0" text-anchor="middle" fill="#c8c8c8" font-weight="normal" font-size="10.0">23</text>
<text transform="translate(722.00,541.4) scale(0.76,1)" x="3.22 9.67" y="0" text-anchor="middle" fill="#c8c8c8" font-weight="normal" font-size="10.0">00</text>
<text transform="translate(768.00,541.4) scale(0.76,1)" x="3.22 9.67" y="0" text-anchor="middle" fill="#c8c8c8" font-weight="normal" font-size="10.0">01</text>
<text transform="translate(814.00,541.4) scale(0.76,1)" x="3.22 9.67" y="0" text-anchor="middle" fill="#c8c8c8" font-weight="normal" font-size="10.0">02</text>
<text transform="translate(849.00,541.4) scale(0.76,1)" x="3.22 9.67" y="0" text-anchor="middle" fill="#c8c8c8" font-weight="normal" font-size="10.0">03</text>
<text transform="translate(882.00,541.4) scale(0.76,1)" x="3.22 9.67" y="0" text-anchor="middle" fill="#c8c8c8" font-weight="normal" font-size="10.0">04</text>
<text transform="translate(927.00,541.4) scale(0.76,1)" x="3.22 9.67" y="0" text-anchor="middle" fill="#c8c8c8" font-weight="normal" font-size="10.0">05</text>
<text transform="translate(957.00,541.4) scale(0.76,1)" x="3.22 9.67" y="0" text-anchor="middle" fill="#c8c8c8" font-weight="normal" font-size="10.0">06</text>
<text transform="translate(723.00,530) scale(0.76,1)" x="3.22 9.67" y="0" text-anchor="middle" fill="#c8c8c8" font-weight="normal" font-size="10.0">10</text>
<clipPath id="c1"><rect x="971" y="39" width="47" height="163"/></clipPath>
<clipPath id="c2"><rect x="971" y="206" width="47" height="177"/></clipPath>
<clipPath id="c3"><rect x="971" y="387" width="47" height="159"/></clipPath>
<g clip-path="url(#c1)">
<text transform="translate(972.20,104.0) scale(0.76,1)" x="3.22 9.67 16.12 22.57 29.01 35.46" y="0" text-anchor="middle" fill="#c4c4c4" font-weight="normal" font-size="10.0">11,650</text>
<text transform="translate(972.20,138.0) scale(0.76,1)" x="3.22 9.67 16.12 22.57 29.01 35.46" y="0" text-anchor="middle" fill="#c4c4c4" font-weight="normal" font-size="10.0">11,600</text>
<text transform="translate(972.20,172.0) scale(0.76,1)" x="3.22 9.67 16.12 22.57 29.01 35.46" y="0" text-anchor="middle" fill="#c4c4c4" font-weight="normal" font-size="10.0">11,550</text>
<text transform="translate(972.20,206.0) scale(0.76,1)" x="3.22 9.67 16.12 22.57 29.01 35.46" y="0" text-anchor="middle" fill="#c4c4c4" font-weight="normal" font-size="10.0">11,500</text>
<text transform="translate(972.20,71.0) scale(0.76,1)" x="3.22 9.67 16.12 22.57 29.01 35.46" y="0" text-anchor="middle" fill="#c4c4c4" font-weight="normal" font-size="10.0">11,700</text>
</g>
<g clip-path="url(#c2)">
<text transform="translate(972.20,221.0) scale(0.76,1)" x="3.22 9.67 16.12 22.57 29.01" y="0" text-anchor="middle" fill="#c4c4c4" font-weight="normal" font-size="10.0">4,925</text>
<text transform="translate(972.20,266.0) scale(0.76,1)" x="3.22 9.67 16.12 22.57 29.01" y="0" text-anchor="middle" fill="#c4c4c4" font-weight="normal" font-size="10.0">4,900</text>
<text transform="translate(972.20,312.0) scale(0.76,1)" x="3.22 9.67 16.12 22.57 29.01" y="0" text-anchor="middle" fill="#c4c4c4" font-weight="normal" font-size="10.0">4,875</text>
<text transform="translate(972.20,357.0) scale(0.76,1)" x="3.22 9.67 16.12 22.57 29.01" y="0" text-anchor="middle" fill="#c4c4c4" font-weight="normal" font-size="10.0">4,850</text>
</g>
<g clip-path="url(#c3)">
<text transform="translate(972.20,458.0) scale(0.76,1)" x="3.22 9.67 16.12 22.57 29.01" y="0" text-anchor="middle" fill="#c4c4c4" font-weight="normal" font-size="10.0">6,750</text>
<text transform="translate(972.20,500.0) scale(0.76,1)" x="3.22 9.67 16.12 22.57 29.01" y="0" text-anchor="middle" fill="#c4c4c4" font-weight="normal" font-size="10.0">6,700</text>
<text transform="translate(972.20,542.0) scale(0.76,1)" x="3.22 9.67 16.12 22.57 29.01" y="0" text-anchor="middle" fill="#c4c4c4" font-weight="normal" font-size="10.0">6,650</text>
<text transform="translate(972.20,417.0) scale(0.76,1)" x="3.22 9.67 16.12 22.57 29.01" y="0" text-anchor="middle" fill="#c4c4c4" font-weight="normal" font-size="10.0">6,800</text>
</g>
<rect x="971" y="51" width="47" height="17" fill="#d6d6d6"/>
<text transform="translate(980.30,63) scale(0.76,1)" x="3.22 9.67 16.12 22.57 29.01 35.46" y="0" text-anchor="middle" fill="#101010" font-weight="bold" font-size="10.0">11,719</text>
<rect x="971" y="241" width="47" height="17" fill="#d6d6d6"/>
<text transform="translate(982.75,253) scale(0.76,1)" x="3.22 9.67 16.12 22.57 29.01" y="0" text-anchor="middle" fill="#101010" font-weight="bold" font-size="10.0">4,910</text>
<rect x="971" y="402" width="47" height="17" fill="#d6d6d6"/>
<text transform="translate(982.75,414) scale(0.76,1)" x="3.22 9.67 16.12 22.57 29.01" y="0" text-anchor="middle" fill="#101010" font-weight="bold" font-size="10.0">6,809</text>
</g></svg></body></html>
